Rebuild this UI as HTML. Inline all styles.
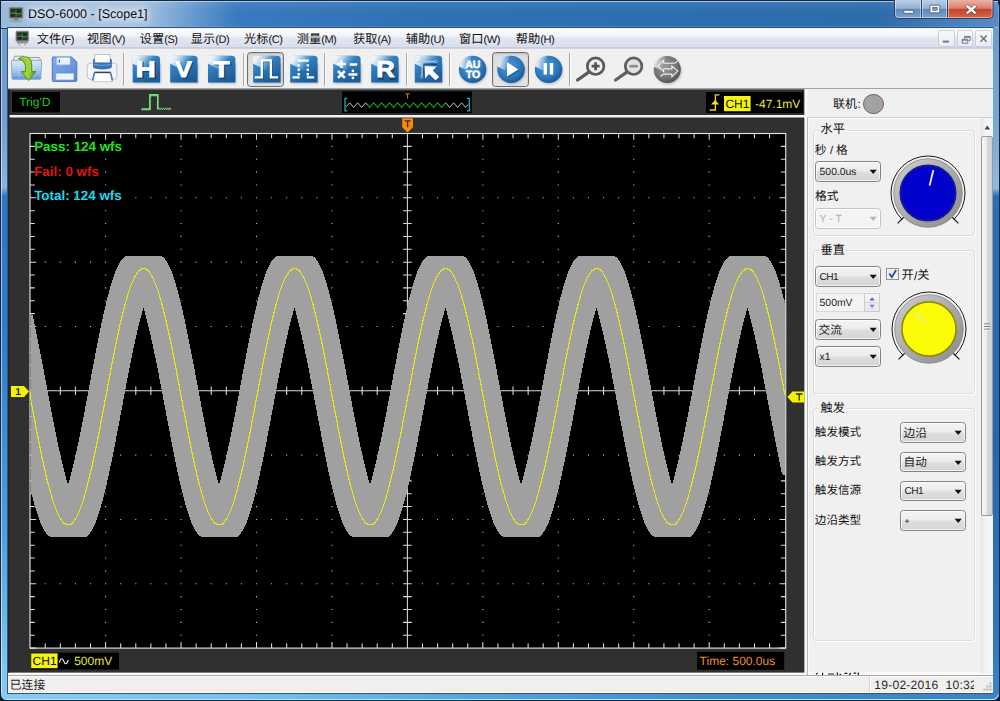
<!DOCTYPE html>
<html><head><meta charset="utf-8"><title>DSO-6000 - [Scope1]</title>
<style>
html,body{margin:0;padding:0;}
body{width:1000px;height:701px;overflow:hidden;background:#0e1b30;font-family:"Liberation Sans", sans-serif;position:relative;text-rendering:geometricPrecision;-webkit-font-smoothing:antialiased;}
.a{position:absolute;}
.t{position:absolute;white-space:pre;line-height:1.149;}
.ov{position:absolute;left:0;top:0;}

#win{left:0;top:0;width:998px;height:699px;border:1px solid #16263e;border-radius:7px 7px 7px 7px;overflow:hidden;
 background:linear-gradient(180deg,#7aa6d4 0,#6f9fd2 28px,#729fd2 120px,#8ab4de 186px,#2e76c6 195px,#2f7ccc 330px,#4a9cde 520px,#7cc4ee 660px,#88ccf2 699px);}
#bframe{left:1px;top:693.4px;width:997px;height:5.6px;background:linear-gradient(90deg,#86cdf2 0,#74c1ec 250px,#52a6e0 470px,#3e8ed4 700px,#3684ca 1000px);box-shadow:0 1px 0 rgba(200,235,255,.8);border-radius:0 0 6px 6px;}
#win2{left:1px;top:1px;width:994px;height:695px;border:1px solid rgba(255,255,255,.55);border-radius:6px;}
#rframe{left:993px;top:28px;width:6px;height:666px;background:linear-gradient(180deg,#6c9bcd 0,#78a8d8 100px,#8fbbe2 160px,#2c6db8 168px,#2767b2 420px,#2f74bc 600px,#3a84c8 666px);}
#title{left:1px;top:1px;width:997px;height:27px;
 background:linear-gradient(90deg,#9ab8d8 0,#a9c4e0 60px,#a6c2df 140px,#6f9fd0 185px,#397ac0 235px,#2e72b6 420px,#2c6fb0 700px,#2d6cad 880px,#5a8cc4 1000px);}
#titleshade{left:1px;top:1px;width:997px;height:27.6px;background:linear-gradient(180deg,rgba(200,225,248,.75) 0,rgba(200,225,248,.75) 1px,rgba(255,255,255,.08) 1.2px,rgba(255,255,255,0) 10px,rgba(255,255,255,0) 25.4px,rgba(150,200,240,.7) 25.8px,rgba(150,200,240,.7) 26.6px,rgba(20,50,90,.9) 26.9px,rgba(20,50,90,.9) 27.6px);}
#client{left:8px;top:28.4px;width:985px;height:664.4px;background:#f0f0f0;outline:1px solid #35557e;}
#menubar{left:8px;top:28.6px;width:985px;height:20.6px;background:linear-gradient(180deg,#fcfcfe 0,#f5f6fb 5px,#eff1f8 7.6px,#e3e7f2 8.6px,#dfe3f0 13px,#d9deeb 17.8px,#c6cbd9 18.6px,#c6cbd9 19.4px,#f3f3f5 19.9px,#f3f3f5 20.6px);}
#toolbar{left:8px;top:48.5px;width:985px;height:40.5px;background:#f0f0f0;border-bottom:1px solid #a3a3a3;box-sizing:border-box;}
.sep{position:absolute;top:52.5px;width:1px;height:33px;background:#a8a8a8;box-shadow:1px 0 0 #fbfbfb;}
.pressed{position:absolute;top:51.5px;height:35px;width:37px;border:1px solid #707070;border-radius:3.5px;background:linear-gradient(180deg,#dcdcdc,#e6e6e6);box-sizing:border-box;box-shadow:inset 0 1px 2px rgba(0,0,0,.15);}
#status{left:8px;top:674.8px;width:985px;height:18px;background:#f0efee;border-top:1px solid #a6a6a6;box-sizing:border-box;box-shadow:inset 0 1px 0 #fdfdfd,inset 0 -1px 0 #fbfbfb;}
#understrip{left:8px;top:672.4px;width:985px;height:2.6px;background:#f8f8f8;}
.mdi{position:absolute;top:30px;height:16.5px;width:16.5px;border:1px solid #c9cfdc;border-radius:2px;box-sizing:border-box;background:linear-gradient(180deg,#f8f9fc,#e9ecf5);}
.cap{position:absolute;top:0;height:18.5px;box-sizing:border-box;}

.combo{position:absolute;height:20.8px;border:1px solid #848484;border-radius:3.5px;box-sizing:border-box;background:linear-gradient(180deg,#f4f4f4 0,#ececec 45%,#dedede 55%,#d4d4d4 100%);box-shadow:inset 0 0 0 1px rgba(255,255,255,.7);}
.combo.dis{border-color:#c4c4c4;background:#f4f4f4;}
.grp{position:absolute;left:813.4px;width:161.6px;border:1px solid #dcdcdc;border-radius:3.5px;box-sizing:border-box;box-shadow:inset 1px 1px 0 #fdfdfd,1px 1px 0 #fdfdfd;}
.glab{position:absolute;background:#f0f0f0;height:12px;}

</style></head><body>
<div id="win" class="a"></div><div id="win2" class="a"></div>
<div id="title" class="a"></div><div id="titleshade" class="a"></div>
<svg class="a" style="left:8px;top:6px" width="18" height="18" viewBox="0 0 18 18">
<rect x="1.3" y="1.5" width="13.6" height="10.8" rx="1" fill="#5a5f5a" stroke="#8d8f8d" stroke-width="1"/>
<rect x="2.8" y="3" width="10.6" height="7.8" fill="#1d2c22"/>
<path d="M3 7.5H13M8 3.5V10.5" stroke="#3f8a3e" stroke-width="1"/><path d="M3.5 7.5Q5.5 3.5 8 7.5T12.8 7.5" stroke="#62b05a" stroke-width=".55" fill="none" opacity=".8"/>
<rect x="5.5" y="12.8" width="5" height="1.6" fill="#7d7d7d"/><rect x="2.2" y="14.2" width="11.8" height="1.6" rx=".6" fill="#9a9a9a"/>
</svg>
<div class="t" style="left:28.00px;top:7px;font-size:12.50px;color:#0a0a14;font-weight:normal;text-shadow:0 0 6px #fff,0 0 9px #fff,0 0 12px rgba(255,255,255,.8);">DSO-6000 - [Scope1]</div>
<svg class="a" style="left:892px;top:0" width="104" height="22" viewBox="892 0 104 22">
<defs>
<linearGradient id="cb1" x1="0" y1="0" x2="0" y2="1"><stop offset="0" stop-color="#b9cee6"/><stop offset=".45" stop-color="#93b1d4"/><stop offset=".5" stop-color="#5f89bb"/><stop offset="1" stop-color="#7ba4d0"/></linearGradient>
<linearGradient id="cb2" x1="0" y1="0" x2="0" y2="1"><stop offset="0" stop-color="#e9b3a6"/><stop offset=".45" stop-color="#d97f6c"/><stop offset=".5" stop-color="#c2432a"/><stop offset="1" stop-color="#d4694c"/></linearGradient>
</defs>
<path d="M894.5 0V14.5Q894.5 18.5 898.5 18.5H921.5V0Z" fill="url(#cb1)"/>
<rect x="921.5" y="0" width="26" height="18.5" fill="url(#cb1)"/>
<path d="M947.5 0V18.5H989Q993 18.5 993 14.5V0Z" fill="url(#cb2)"/>
<path d="M894.5 0V14.5Q894.5 18.5 898.5 18.5H989Q993 18.5 993 14.5V0M921.5 0V18.5M947.5 0V18.5" fill="none" stroke="#2c3f5c" stroke-width="1"/>
<path d="M895.5 0V14.5Q895.5 17.5 898.5 17.5H989Q992 17.5 992 14.5V0M922.5 0V17.5M920.5 0V17.5M946.5 0V17.5M948.5 0V17.5" fill="none" stroke="rgba(255,255,255,.45)" stroke-width="1"/>
<rect x="903.8" y="10.3" width="9.6" height="3" rx=".5" fill="#fff" stroke="#44546c" stroke-width=".8"/>
<rect x="930" y="5.2" width="9.8" height="7.6" rx=".6" fill="#fff" stroke="#44546c" stroke-width=".8"/><rect x="932.7" y="7.6" width="4.4" height="2.6" fill="#7d9cc4" stroke="#44546c" stroke-width=".7"/>
<path d="M966.6 5.6L975.8 13.6M975.8 5.6L966.6 13.6" stroke="#5a2a22" stroke-width="3.8" stroke-linecap="butt" opacity=".75"/><path d="M966.8 5.8L975.6 13.4M975.6 5.8L966.8 13.4" stroke="#fff" stroke-width="2.5" stroke-linecap="butt"/>
</svg>
<div id="bframe" class="a"></div><div id="client" class="a"></div><div id="rframe" class="a"></div>
<div id="menubar" class="a"></div>
<svg class="a" style="left:14px;top:30px" width="17" height="17" viewBox="0 0 17 17">
<rect x="2" y="1.2" width="12.6" height="10" rx=".8" fill="#575c57" stroke="#8a8c8a" stroke-width=".9"/>
<rect x="3.4" y="2.6" width="9.8" height="7.2" fill="#1d2c22"/>
<path d="M3.6 6.4H13M8.3 3V9.6" stroke="#3f8a3e" stroke-width=".9"/><path d="M4 6.4Q6 2.8 8.3 6.4T12.8 6.4" stroke="#62b05a" stroke-width=".55" fill="none" opacity=".8"/>
<rect x="3" y="11.6" width="10.8" height="1.8" fill="#8a8a8a"/><path d="M4.5 14.8H6.5M10 14.8H12" stroke="#9a9a9a" stroke-width="1"/>
</svg>
<div class="t" style="left:61.30px;top:34px;font-size:11.00px;color:#101010;font-weight:normal;letter-spacing:-.5px;">(F)</div>
<div class="t" style="left:111.70px;top:34px;font-size:11.00px;color:#101010;font-weight:normal;letter-spacing:-.5px;">(V)</div>
<div class="t" style="left:164.30px;top:34px;font-size:11.00px;color:#101010;font-weight:normal;letter-spacing:-.5px;">(S)</div>
<div class="t" style="left:215.30px;top:34px;font-size:11.00px;color:#101010;font-weight:normal;letter-spacing:-.5px;">(D)</div>
<div class="t" style="left:268.60px;top:34px;font-size:11.00px;color:#101010;font-weight:normal;letter-spacing:-.5px;">(C)</div>
<div class="t" style="left:321.30px;top:34px;font-size:11.00px;color:#101010;font-weight:normal;letter-spacing:-.5px;">(M)</div>
<div class="t" style="left:377.60px;top:34px;font-size:11.00px;color:#101010;font-weight:normal;letter-spacing:-.5px;">(A)</div>
<div class="t" style="left:430.30px;top:34px;font-size:11.00px;color:#101010;font-weight:normal;letter-spacing:-.5px;">(U)</div>
<div class="t" style="left:483.60px;top:34px;font-size:11.00px;color:#101010;font-weight:normal;letter-spacing:-.5px;">(W)</div>
<div class="t" style="left:540.30px;top:34px;font-size:11.00px;color:#101010;font-weight:normal;letter-spacing:-.5px;">(H)</div>
<div class="mdi" style="left:938.3px"></div>
<div class="mdi" style="left:956.6px"></div>
<div class="mdi" style="left:975.0px"></div>
<svg class="a" style="left:936px;top:28px" width="58" height="20" viewBox="936 28 58 20">
<rect x="942.8" y="40.6" width="6.2" height="1.9" fill="#6f7480"/>
<path d="M962.2 39.3H967.8V43.2H962.2ZM962.2 40.2H967.8" fill="none" stroke="#737888" stroke-width="1"/><path d="M964.6 38.6V36.4H970.2V40.5H968.6M964.6 37.3H970.2" fill="none" stroke="#737888" stroke-width="1"/>
<path d="M980.5 35.4L986.7 41.8M986.7 35.4L980.5 41.8" stroke="#6f7482" stroke-width="1.5"/>
</svg>
<div id="toolbar" class="a"></div>
<div id="understrip" class="a"></div><div id="status" class="a"></div>
<div class="a" style="left:868.5px;top:676px;width:1px;height:16px;background:#d4d4d4;box-shadow:1px 0 0 #fff"></div>
<div class="t" style="left:874.30px;top:679px;font-size:12.10px;color:#2a2a2a;font-weight:normal;width:99.9px;overflow:hidden;letter-spacing:.22px;">19-02-2016  10:32</div>
<svg class="a" style="left:982px;top:681px" width="11" height="11" viewBox="0 0 11 11"><g fill="#b8b8b8"><rect x="7.5" y="7.5" width="2" height="2"/><rect x="4.5" y="7.5" width="2" height="2"/><rect x="7.5" y="4.5" width="2" height="2"/><rect x="1.5" y="7.5" width="2" height="2"/><rect x="4.5" y="4.5" width="2" height="2"/><rect x="7.5" y="1.5" width="2" height="2"/></g></svg>
<div class="sep" style="left:123.2px"></div>
<div class="sep" style="left:243.0px"></div>
<div class="sep" style="left:324.4px"></div>
<div class="sep" style="left:406.4px"></div>
<div class="sep" style="left:449.3px"></div>
<div class="sep" style="left:569.2px"></div>
<div class="pressed" style="left:247.2px"></div><div class="pressed" style="left:491.6px"></div>
<svg class="a" style="left:0;top:48px" width="720" height="42" viewBox="0 48 720 42"><defs>
<linearGradient id="bl" x1="0" y1="0" x2=".55" y2="1"><stop offset="0" stop-color="#5a9ed6"/><stop offset=".45" stop-color="#2f7cbc"/><stop offset="1" stop-color="#1c5c98"/></linearGradient>
<linearGradient id="fold" x1="0" y1="0" x2="1" y2="1"><stop offset="0" stop-color="#f0f6fc" stop-opacity=".0"/><stop offset=".45" stop-color="#d6e6f6" stop-opacity=".85"/><stop offset="1" stop-color="#6fa8da"/></linearGradient>
<radialGradient id="ball" cx=".42" cy=".38" r=".62"><stop offset="0" stop-color="#4f97d2"/><stop offset=".7" stop-color="#2c78ba"/><stop offset="1" stop-color="#1a5a98"/></radialGradient>
<radialGradient id="gball" cx=".42" cy=".38" r=".62"><stop offset="0" stop-color="#9a9a9a"/><stop offset=".7" stop-color="#757575"/><stop offset="1" stop-color="#555"/></radialGradient>
<linearGradient id="curl" x1="0" y1=".1" x2=".8" y2=".45"><stop offset="0" stop-color="#f2f4f6" stop-opacity="1"/><stop offset=".22" stop-color="#e8eff7" stop-opacity="1"/><stop offset=".5" stop-color="#b4d1ec" stop-opacity=".92"/><stop offset=".8" stop-color="#6fa8da" stop-opacity=".55"/><stop offset="1" stop-color="#4a8fcc" stop-opacity="0"/></linearGradient><linearGradient id="curlb" x1="0" y1=".35" x2="1" y2=".6"><stop offset="0" stop-color="#f2f4f6" stop-opacity="1"/><stop offset=".3" stop-color="#dfeaf5" stop-opacity=".96"/><stop offset=".65" stop-color="#9fc5e8" stop-opacity=".75"/><stop offset="1" stop-color="#5e9dd4" stop-opacity=".1"/></linearGradient><linearGradient id="curlg" x1="0" y1=".35" x2="1" y2=".6"><stop offset="0" stop-color="#f2f2f2" stop-opacity="1"/><stop offset=".3" stop-color="#dcdcdc" stop-opacity=".95"/><stop offset=".65" stop-color="#b4b4b4" stop-opacity=".7"/><stop offset="1" stop-color="#8a8a8a" stop-opacity=".1"/></linearGradient><linearGradient id="fold2" x1="0" y1="0" x2="1" y2="1"><stop offset="0" stop-color="#e8f2fb"/><stop offset="1" stop-color="#5c9fd6"/></linearGradient>
<linearGradient id="fo" x1="0" y1="0" x2="0" y2="1"><stop offset="0" stop-color="#dbe8f7"/><stop offset=".5" stop-color="#a9c8ee"/><stop offset="1" stop-color="#5a95dc"/></linearGradient>
<linearGradient id="ga" x1="0" y1="0" x2="1" y2="0"><stop offset="0" stop-color="#6aa816"/><stop offset=".5" stop-color="#a4d83a"/><stop offset="1" stop-color="#5c9a12"/></linearGradient>
<linearGradient id="fl" x1="0" y1="0" x2="1" y2="1"><stop offset="0" stop-color="#86aae6"/><stop offset="1" stop-color="#5a88d6"/></linearGradient>
<filter id="sh" x="-20%" y="-20%" width="150%" height="150%"><feGaussianBlur stdDeviation=".9"/></filter>
<filter id="sh2" x="-20%" y="-20%" width="150%" height="150%"><feGaussianBlur stdDeviation=".5"/></filter>
</defs><path d="M13.2 60.6L14.6 56.2H23.4L24.6 57.6H39.4L40.8 60.6Z" fill="#f4f4f4" stroke="#8a8a8a" stroke-width=".9"/><path d="M11.4 61Q11.4 60.2 12.2 60.2H40.8Q41.6 60.2 41.6 61L40.8 78.4Q40.7 79.3 39.8 79.3H13Q12.1 79.3 12 78.4Z" fill="url(#fo)" stroke="#7d9cc8" stroke-width=".8"/><path d="M12 63.2H41M12 65.6H41M12 68H41M12 70.4H41M12 72.8H41M12.3 75.2H40.8M19 60.6V79M34 60.6V79" stroke="#f2f7fd" stroke-width=".4" opacity=".45"/><path d="M18.2 58.6Q27.4 54.2 30.8 60.2Q31.7 62.2 31.7 65V71.6H36L28.6 80.6L21.2 71.6H25.5V66.4Q25.3 61 18.2 58.6Z" fill="url(#ga)" stroke="#4f8a10" stroke-width=".9" stroke-linejoin="round"/><path d="M21 58.2Q29 56.4 30.2 63.6V72.4" stroke="#c9ec6a" stroke-width="1" fill="none" opacity=".75"/><path d="M52.3 58Q52.3 57 53.3 57H71.6L76.8 62V80.4Q76.8 81.4 75.8 81.4H53.3Q52.3 81.4 52.3 80.4Z" fill="url(#fl)" stroke="#4a76c8" stroke-width="1"/><path d="M56.8 57.5H70V64.2Q70 64.8 69.4 64.8H57.4Q56.8 64.8 56.8 64.2Z" fill="#e9f0fa" stroke="#a9c0e6" stroke-width=".5"/><rect x="58.7" y="59.6" width="1.3" height="3.4" fill="#5d6f92"/><path d="M60.5 58L69.6 58L69.6 61Z" fill="#fff" opacity=".6"/><rect x="56" y="73.6" width="17.6" height="6.2" fill="#f3f6fb" stroke="#b4c8ea" stroke-width=".5"/><path d="M56.4 76.4H73.2" stroke="#dfe7f3" stroke-width=".8"/><rect x="94.8" y="54.4" width="15.2" height="10" fill="#fbfbfd" stroke="#b2b8c4" stroke-width=".8"/><rect x="87.3" y="63.2" width="29.6" height="16" rx="3" fill="#f3f5f9" stroke="#b4bed0" stroke-width=".9"/><path d="M93 60.4Q93 58.4 94.8 58.6V62.6H110V58.6Q111.9 58.4 111.9 60.4V66.2Q111.9 68.4 109 68.8Q102.5 70 96 68.8Q93 68.4 93 66.2Z" fill="#3c74ba"/><path d="M94 64.6Q102.5 66.2 111 64.6" stroke="#79a4d8" stroke-width="1" fill="none"/><path d="M94.6 72.6H110.4L112.6 81.6H92.4Z" fill="#fdfdfe" stroke="#b6bcc8" stroke-width=".7"/><path d="M94.4 72.4H110.6" stroke="#3a4250" stroke-width="1.5"/><path d="M94.4 72.6L92.6 80.6M110.6 72.6L112.4 80.6" stroke="#4a80c2" stroke-width="1.7"/><path d="M133.7 63.8H160.7V83.4H133.7Z" fill="#1a4a7a" opacity=".35" filter="url(#sh)"/><path d="M132.7 57.3L134.2 55.8H156.6Q160.1 55.8 160.1 59.3V82.6H132.7Z" fill="url(#bl)"/><path d="M132.4 63.6L141.7 68.2L149.7 73.3L156.7 55.5H134.2L132.4 57.3Z" fill="url(#curl)"/><g transform="translate(145.7 0) scale(1.22 1)"><text x="1" y="78.4" font-family='"Liberation Sans",sans-serif' font-weight="bold" font-size="22.6" text-anchor="middle" fill="#0c3158" opacity=".6" filter="url(#sh2)" stroke="#0c3158" stroke-width="1.6">H</text><text x="0" y="77.1" font-family='"Liberation Sans",sans-serif' font-weight="bold" font-size="22.6" text-anchor="middle" fill="#fff" stroke="#fff" stroke-width="0.90" stroke-linejoin="miter">H</text></g><path d="M171.2 63.8H198.2V83.4H171.2Z" fill="#1a4a7a" opacity=".35" filter="url(#sh)"/><path d="M170.2 57.3L171.7 55.8H194.1Q197.6 55.8 197.6 59.3V82.6H170.2Z" fill="url(#bl)"/><path d="M169.9 63.6L179.2 68.2L187.2 73.3L194.2 55.5H171.7L169.9 57.3Z" fill="url(#curl)"/><g transform="translate(183.5 0) scale(1.10 1)"><text x="1" y="78.4" font-family='"Liberation Sans",sans-serif' font-weight="bold" font-size="22.6" text-anchor="middle" fill="#0c3158" opacity=".6" filter="url(#sh2)" stroke="#0c3158" stroke-width="1.6">V</text><text x="0" y="77.1" font-family='"Liberation Sans",sans-serif' font-weight="bold" font-size="22.6" text-anchor="middle" fill="#fff" stroke="#fff" stroke-width="0.90" stroke-linejoin="miter">V</text></g><path d="M209.0 63.8H236.0V83.4H209.0Z" fill="#1a4a7a" opacity=".35" filter="url(#sh)"/><path d="M208.0 57.3L209.5 55.8H231.9Q235.4 55.8 235.4 59.3V82.6H208.0Z" fill="url(#bl)"/><path d="M207.7 63.6L217.0 68.2L225.0 73.3L232.0 55.5H209.5L207.7 57.3Z" fill="url(#curl)"/><g transform="translate(221.3 0) scale(1.20 1)"><text x="1" y="78.4" font-family='"Liberation Sans",sans-serif' font-weight="bold" font-size="22.6" text-anchor="middle" fill="#0c3158" opacity=".6" filter="url(#sh2)" stroke="#0c3158" stroke-width="1.6">T</text><text x="0" y="77.1" font-family='"Liberation Sans",sans-serif' font-weight="bold" font-size="22.6" text-anchor="middle" fill="#fff" stroke="#fff" stroke-width="0.90" stroke-linejoin="miter">T</text></g><path d="M254.2 63.8H281.2V83.4H254.2Z" fill="#1a4a7a" opacity=".35" filter="url(#sh)"/><path d="M253.2 57.3L254.7 55.8H277.1Q280.6 55.8 280.6 59.3V82.6H253.2Z" fill="url(#bl)"/><path d="M252.9 63.6L262.2 68.2L270.2 73.3L277.2 55.5H254.7L252.9 57.3Z" fill="url(#curl)"/><path d="M254.8 77.3H261.8V60.4H270.9V77.3H278.2" stroke="#10406e" stroke-width="2.4" fill="none" opacity=".5" transform="translate(.8 1)" filter="url(#sh2)"/><path d="M254.8 77.3H261.8V60.4H270.9V77.3H278.2" stroke="#fff" stroke-width="2.3" fill="none"/><path d="M291.2 63.8H318.2V83.4H291.2Z" fill="#1a4a7a" opacity=".35" filter="url(#sh)"/><path d="M290.2 57.3L291.7 55.8H314.1Q317.6 55.8 317.6 59.3V82.6H290.2Z" fill="url(#bl)"/><path d="M289.9 63.6L299.2 68.2L307.2 73.3L314.2 55.5H291.7L289.9 57.3Z" fill="url(#curl)"/><path d="M292.4 77.3H299.6M306.8 77.3H314.2M297.6 60.7H308.9" stroke="#fff" stroke-width="2.2" fill="none"/><path d="M298.7 64.2V75.4M307.8 64.2V75.4" stroke="#fff" stroke-width="2.3" stroke-dasharray="2.4 2" fill="none"/><path d="M334.2 63.8H361.2V83.4H334.2Z" fill="#1a4a7a" opacity=".35" filter="url(#sh)"/><path d="M333.2 57.3L334.7 55.8H357.1Q360.6 55.8 360.6 59.3V82.6H333.2Z" fill="url(#bl)"/><path d="M332.9 63.6L342.2 68.2L350.2 73.3L357.2 55.5H334.7L332.9 57.3Z" fill="url(#curl)"/><path d="M336.9 64.1H345.9M341.4 60.2V68M349.7 64.4H357.3M338 71L344.8 77.8M344.8 71L338 77.8M348.4 74.4H357.4" stroke="#fff" stroke-width="2.5" fill="none"/><circle cx="352.9" cy="70.9" r="1.35" fill="#fff"/><circle cx="352.9" cy="77.9" r="1.35" fill="#fff"/><path d="M372.2 63.8H399.2V83.4H372.2Z" fill="#1a4a7a" opacity=".35" filter="url(#sh)"/><path d="M371.2 57.3L372.7 55.8H395.1Q398.6 55.8 398.6 59.3V82.6H371.2Z" fill="url(#bl)"/><path d="M370.9 63.6L380.2 68.2L388.2 73.3L395.2 55.5H372.7L370.9 57.3Z" fill="url(#curl)"/><g transform="translate(385.4 0) scale(1.12 1)"><text x="1" y="78.6" font-family='"Liberation Sans",sans-serif' font-weight="bold" font-size="22.8" text-anchor="middle" fill="#0c3158" opacity=".6" filter="url(#sh2)" stroke="#0c3158" stroke-width="1.6">R</text><text x="0" y="77.3" font-family='"Liberation Sans",sans-serif' font-weight="bold" font-size="22.8" text-anchor="middle" fill="#fff" stroke="#fff" stroke-width="0.90" stroke-linejoin="miter">R</text></g><path d="M415.8 63.8H442.8V83.4H415.8Z" fill="#1a4a7a" opacity=".35" filter="url(#sh)"/><path d="M414.8 57.3L416.3 55.8H438.7Q442.2 55.8 442.2 59.3V82.6H414.8Z" fill="url(#bl)"/><path d="M414.5 63.6L423.8 68.2L431.8 73.3L438.8 55.5H416.3L414.5 57.3Z" fill="url(#curl)"/><path d="M422.1 58.8V75.4M417.4 61.6H434.6" stroke="#a9d0ee" stroke-width="1.2" fill="none"/><circle cx="422.1" cy="58.2" r="1.3" fill="none" stroke="#a9d0ee" stroke-width=".9"/><circle cx="422.1" cy="76.4" r="1.4" fill="none" stroke="#a9d0ee" stroke-width=".9"/><circle cx="435.6" cy="61.6" r="1.4" fill="none" stroke="#a9d0ee" stroke-width=".9"/><path d="M424 78V64.4H437" stroke="#123e6a" stroke-width="1.6" fill="none" opacity=".75"/><path d="M424.6 66.2L436.6 66.6L432.7 70.5L439.2 77L435.5 80.3L429 74.1L425 78.6Z" fill="#fff"/><circle cx="473.4" cy="70.6" r="13.7" fill="#1a4a7a" opacity=".3" filter="url(#sh)"/><circle cx="472.6" cy="69.4" r="13.7" fill="url(#ball)"/><clipPath id="cb472"><circle cx="472.6" cy="69.4" r="14.0"/></clipPath><path clip-path="url(#cb472)" d="M457.9 66.0L467.0 70.6L472.1 54.7H457.9Z" fill="url(#curlb)"/><text x="472.8" y="68.4" font-family='"Liberation Sans",sans-serif' font-weight="bold" font-size="10.6" text-anchor="middle" fill="#fff" stroke="#fff" stroke-width=".55">AU</text><text x="473" y="77.6" font-family='"Liberation Sans",sans-serif' font-weight="bold" font-size="10.6" text-anchor="middle" fill="#fff" stroke="#fff" stroke-width=".55">TO</text><circle cx="511.8" cy="70.6" r="13.7" fill="#1a4a7a" opacity=".3" filter="url(#sh)"/><circle cx="511.0" cy="69.4" r="13.7" fill="url(#ball)"/><clipPath id="cb511"><circle cx="511.0" cy="69.4" r="14.0"/></clipPath><path clip-path="url(#cb511)" d="M496.3 66.0L505.4 70.6L510.5 54.7H496.3Z" fill="url(#curlb)"/><path d="M507 62.2L518.4 69.4L507 76.6Z" fill="#0e3c68" opacity=".5" transform="translate(1 1.2)" filter="url(#sh2)"/><path d="M507 62.2L518.4 69.4L507 76.6Z" fill="#fff"/><circle cx="549.4" cy="70.6" r="13.7" fill="#1a4a7a" opacity=".3" filter="url(#sh)"/><circle cx="548.6" cy="69.4" r="13.7" fill="url(#ball)"/><clipPath id="cb548"><circle cx="548.6" cy="69.4" r="14.0"/></clipPath><path clip-path="url(#cb548)" d="M533.9 66.0L543.0 70.6L548.1 54.7H533.9Z" fill="url(#curlb)"/><rect x="543.6" y="63" width="3.4" height="11.6" fill="#fff"/><rect x="549.8" y="63" width="3.4" height="11.6" fill="#fff"/><path d="M588.8 72.2L577.6 80" stroke="#5a5a5a" stroke-width="3.3" stroke-linecap="round"/><circle cx="595.6" cy="66.2" r="8.3" fill="#ededed" stroke="#595959" stroke-width="2.7"/><path d="M591.6 66.2H599.6M595.6 62.2V70.2" stroke="#555" stroke-width="2.7"/><path d="M626.8 72.2L615.6 80" stroke="#606060" stroke-width="3.3" stroke-linecap="round"/><circle cx="633.6" cy="66.2" r="8.3" fill="#e2e2e2" stroke="#5e5e5e" stroke-width="2.7"/><path d="M629.4 66.2H637.8" stroke="#8a8a8a" stroke-width="2.6"/><circle cx="668.1" cy="70.7" r="13.5" fill="#1a4a7a" opacity=".3" filter="url(#sh)"/><circle cx="667.3" cy="69.5" r="13.5" fill="url(#gball)"/><clipPath id="cb667"><circle cx="667.3" cy="69.5" r="13.8"/></clipPath><path clip-path="url(#cb667)" d="M652.8 66.1L661.7 70.7L666.8 55.0H652.8Z" fill="url(#curlg)"/><path d="M677.5 61Q676.2 63.3 673 63.3H663.7V60.3L658 66L663.7 71.7V68.7H669.7M660.5 76.7Q661.8 74.1 665 74.1H671.8V76.7L677.8 71.1L671.8 66.1V68.9H665.6" fill="none" stroke="#f2f2f2" stroke-width="1.05" stroke-linejoin="miter"/></svg>
<svg class="a" style="left:0;top:0" width="1000" height="701" viewBox="0 0 1000 701"><rect x="8" y="89.3" width="796.6" height="583.3" fill="#303030"/><rect x="8" y="89.3" width="1.6" height="583.3" fill="#242424"/><rect x="804.6" y="89.3" width="2.6" height="584" fill="#fafafa"/><rect x="9.6" y="115" width="797.5" height="2.5" fill="#f2f2f2"/><rect x="30.00" y="133.50" width="755.70" height="514.60" fill="#000"/><path d="M45.24 133.50v4.8M45.24 648.10v-4.8M60.33 133.50v4.8M60.33 648.10v-4.8M75.42 133.50v4.8M75.42 648.10v-4.8M90.51 133.50v4.8M90.51 648.10v-4.8M105.60 133.50v6.2M105.60 648.10v-6.2M120.69 133.50v4.8M120.69 648.10v-4.8M135.78 133.50v4.8M135.78 648.10v-4.8M150.87 133.50v4.8M150.87 648.10v-4.8M165.96 133.50v4.8M165.96 648.10v-4.8M181.05 133.50v6.2M181.05 648.10v-6.2M196.14 133.50v4.8M196.14 648.10v-4.8M211.23 133.50v4.8M211.23 648.10v-4.8M226.32 133.50v4.8M226.32 648.10v-4.8M241.41 133.50v4.8M241.41 648.10v-4.8M256.50 133.50v6.2M256.50 648.10v-6.2M271.59 133.50v4.8M271.59 648.10v-4.8M286.68 133.50v4.8M286.68 648.10v-4.8M301.77 133.50v4.8M301.77 648.10v-4.8M316.86 133.50v4.8M316.86 648.10v-4.8M331.95 133.50v6.2M331.95 648.10v-6.2M347.04 133.50v4.8M347.04 648.10v-4.8M362.13 133.50v4.8M362.13 648.10v-4.8M377.22 133.50v4.8M377.22 648.10v-4.8M392.31 133.50v4.8M392.31 648.10v-4.8M407.40 133.50v6.2M407.40 648.10v-6.2M422.49 133.50v4.8M422.49 648.10v-4.8M437.58 133.50v4.8M437.58 648.10v-4.8M452.67 133.50v4.8M452.67 648.10v-4.8M467.76 133.50v4.8M467.76 648.10v-4.8M482.85 133.50v6.2M482.85 648.10v-6.2M497.94 133.50v4.8M497.94 648.10v-4.8M513.03 133.50v4.8M513.03 648.10v-4.8M528.12 133.50v4.8M528.12 648.10v-4.8M543.21 133.50v4.8M543.21 648.10v-4.8M558.30 133.50v6.2M558.30 648.10v-6.2M573.39 133.50v4.8M573.39 648.10v-4.8M588.48 133.50v4.8M588.48 648.10v-4.8M603.57 133.50v4.8M603.57 648.10v-4.8M618.66 133.50v4.8M618.66 648.10v-4.8M633.75 133.50v6.2M633.75 648.10v-6.2M648.84 133.50v4.8M648.84 648.10v-4.8M663.93 133.50v4.8M663.93 648.10v-4.8M679.02 133.50v4.8M679.02 648.10v-4.8M694.11 133.50v4.8M694.11 648.10v-4.8M709.20 133.50v6.2M709.20 648.10v-6.2M724.29 133.50v4.8M724.29 648.10v-4.8M739.38 133.50v4.8M739.38 648.10v-4.8M754.47 133.50v4.8M754.47 648.10v-4.8M769.56 133.50v4.8M769.56 648.10v-4.8M30.00 133.50h6.2M785.70 133.50h-6.2M30.00 146.37h4.8M785.70 146.37h-4.8M30.00 159.23h4.8M785.70 159.23h-4.8M30.00 172.09h4.8M785.70 172.09h-4.8M30.00 184.96h4.8M785.70 184.96h-4.8M30.00 197.82h6.2M785.70 197.82h-6.2M30.00 210.69h4.8M785.70 210.69h-4.8M30.00 223.56h4.8M785.70 223.56h-4.8M30.00 236.42h4.8M785.70 236.42h-4.8M30.00 249.29h4.8M785.70 249.29h-4.8M30.00 262.15h6.2M785.70 262.15h-6.2M30.00 275.01h4.8M785.70 275.01h-4.8M30.00 287.88h4.8M785.70 287.88h-4.8M30.00 300.75h4.8M785.70 300.75h-4.8M30.00 313.61h4.8M785.70 313.61h-4.8M30.00 326.48h6.2M785.70 326.48h-6.2M30.00 339.34h4.8M785.70 339.34h-4.8M30.00 352.21h4.8M785.70 352.21h-4.8M30.00 365.07h4.8M785.70 365.07h-4.8M30.00 377.94h4.8M785.70 377.94h-4.8M30.00 390.80h6.2M785.70 390.80h-6.2M30.00 403.67h4.8M785.70 403.67h-4.8M30.00 416.53h4.8M785.70 416.53h-4.8M30.00 429.40h4.8M785.70 429.40h-4.8M30.00 442.26h4.8M785.70 442.26h-4.8M30.00 455.12h6.2M785.70 455.12h-6.2M30.00 467.99h4.8M785.70 467.99h-4.8M30.00 480.86h4.8M785.70 480.86h-4.8M30.00 493.72h4.8M785.70 493.72h-4.8M30.00 506.59h4.8M785.70 506.59h-4.8M30.00 519.45h6.2M785.70 519.45h-6.2M30.00 532.32h4.8M785.70 532.32h-4.8M30.00 545.18h4.8M785.70 545.18h-4.8M30.00 558.04h4.8M785.70 558.04h-4.8M30.00 570.91h4.8M785.70 570.91h-4.8M30.00 583.77h6.2M785.70 583.77h-6.2M30.00 596.64h4.8M785.70 596.64h-4.8M30.00 609.50h4.8M785.70 609.50h-4.8M30.00 622.37h4.8M785.70 622.37h-4.8M30.00 635.24h4.8M785.70 635.24h-4.8M30.00 648.10h6.2M785.70 648.10h-6.2M45.24 386.50v8.6M60.33 386.50v8.6M75.42 386.50v8.6M90.51 386.50v8.6M105.60 386.50v8.6M120.69 386.50v8.6M135.78 386.50v8.6M150.87 386.50v8.6M165.96 386.50v8.6M181.05 386.50v8.6M196.14 386.50v8.6M211.23 386.50v8.6M226.32 386.50v8.6M241.41 386.50v8.6M256.50 386.50v8.6M271.59 386.50v8.6M286.68 386.50v8.6M301.77 386.50v8.6M316.86 386.50v8.6M331.95 386.50v8.6M347.04 386.50v8.6M362.13 386.50v8.6M377.22 386.50v8.6M392.31 386.50v8.6M407.40 386.50v8.6M422.49 386.50v8.6M437.58 386.50v8.6M452.67 386.50v8.6M467.76 386.50v8.6M482.85 386.50v8.6M497.94 386.50v8.6M513.03 386.50v8.6M528.12 386.50v8.6M543.21 386.50v8.6M558.30 386.50v8.6M573.39 386.50v8.6M588.48 386.50v8.6M603.57 386.50v8.6M618.66 386.50v8.6M633.75 386.50v8.6M648.84 386.50v8.6M663.93 386.50v8.6M679.02 386.50v8.6M694.11 386.50v8.6M709.20 386.50v8.6M724.29 386.50v8.6M739.38 386.50v8.6M754.47 386.50v8.6M769.56 386.50v8.6M403.10 146.37h8.6M403.10 159.23h8.6M403.10 172.09h8.6M403.10 184.96h8.6M403.10 197.82h8.6M403.10 210.69h8.6M403.10 223.56h8.6M403.10 236.42h8.6M403.10 249.29h8.6M403.10 262.15h8.6M403.10 275.01h8.6M403.10 287.88h8.6M403.10 300.75h8.6M403.10 313.61h8.6M403.10 326.48h8.6M403.10 339.34h8.6M403.10 352.21h8.6M403.10 365.07h8.6M403.10 377.94h8.6M403.10 390.80h8.6M403.10 403.67h8.6M403.10 416.53h8.6M403.10 429.40h8.6M403.10 442.26h8.6M403.10 455.12h8.6M403.10 467.99h8.6M403.10 480.86h8.6M403.10 493.72h8.6M403.10 506.59h8.6M403.10 519.45h8.6M403.10 532.32h8.6M403.10 545.18h8.6M403.10 558.04h8.6M403.10 570.91h8.6M403.10 583.77h8.6M403.10 596.64h8.6M403.10 609.50h8.6M403.10 622.37h8.6M403.10 635.24h8.6M30.00 390.80H785.70M407.40 133.50V648.10" stroke="#dadada" stroke-width="1.05" fill="none"/><path d="M105.05 146.37h1.1M105.05 159.23h1.1M105.05 172.09h1.1M105.05 184.96h1.1M105.05 197.82h1.1M105.05 210.69h1.1M105.05 223.56h1.1M105.05 236.42h1.1M105.05 249.29h1.1M105.05 262.15h1.1M105.05 275.01h1.1M105.05 287.88h1.1M105.05 300.75h1.1M105.05 313.61h1.1M105.05 326.48h1.1M105.05 339.34h1.1M105.05 352.21h1.1M105.05 365.07h1.1M105.05 377.94h1.1M105.05 390.80h1.1M105.05 403.67h1.1M105.05 416.53h1.1M105.05 429.40h1.1M105.05 442.26h1.1M105.05 455.12h1.1M105.05 467.99h1.1M105.05 480.86h1.1M105.05 493.72h1.1M105.05 506.59h1.1M105.05 519.45h1.1M105.05 532.32h1.1M105.05 545.18h1.1M105.05 558.04h1.1M105.05 570.91h1.1M105.05 583.77h1.1M105.05 596.64h1.1M105.05 609.50h1.1M105.05 622.37h1.1M105.05 635.24h1.1M180.50 146.37h1.1M180.50 159.23h1.1M180.50 172.09h1.1M180.50 184.96h1.1M180.50 197.82h1.1M180.50 210.69h1.1M180.50 223.56h1.1M180.50 236.42h1.1M180.50 249.29h1.1M180.50 262.15h1.1M180.50 275.01h1.1M180.50 287.88h1.1M180.50 300.75h1.1M180.50 313.61h1.1M180.50 326.48h1.1M180.50 339.34h1.1M180.50 352.21h1.1M180.50 365.07h1.1M180.50 377.94h1.1M180.50 390.80h1.1M180.50 403.67h1.1M180.50 416.53h1.1M180.50 429.40h1.1M180.50 442.26h1.1M180.50 455.12h1.1M180.50 467.99h1.1M180.50 480.86h1.1M180.50 493.72h1.1M180.50 506.59h1.1M180.50 519.45h1.1M180.50 532.32h1.1M180.50 545.18h1.1M180.50 558.04h1.1M180.50 570.91h1.1M180.50 583.77h1.1M180.50 596.64h1.1M180.50 609.50h1.1M180.50 622.37h1.1M180.50 635.24h1.1M255.95 146.37h1.1M255.95 159.23h1.1M255.95 172.09h1.1M255.95 184.96h1.1M255.95 197.82h1.1M255.95 210.69h1.1M255.95 223.56h1.1M255.95 236.42h1.1M255.95 249.29h1.1M255.95 262.15h1.1M255.95 275.01h1.1M255.95 287.88h1.1M255.95 300.75h1.1M255.95 313.61h1.1M255.95 326.48h1.1M255.95 339.34h1.1M255.95 352.21h1.1M255.95 365.07h1.1M255.95 377.94h1.1M255.95 390.80h1.1M255.95 403.67h1.1M255.95 416.53h1.1M255.95 429.40h1.1M255.95 442.26h1.1M255.95 455.12h1.1M255.95 467.99h1.1M255.95 480.86h1.1M255.95 493.72h1.1M255.95 506.59h1.1M255.95 519.45h1.1M255.95 532.32h1.1M255.95 545.18h1.1M255.95 558.04h1.1M255.95 570.91h1.1M255.95 583.77h1.1M255.95 596.64h1.1M255.95 609.50h1.1M255.95 622.37h1.1M255.95 635.24h1.1M331.40 146.37h1.1M331.40 159.23h1.1M331.40 172.09h1.1M331.40 184.96h1.1M331.40 197.82h1.1M331.40 210.69h1.1M331.40 223.56h1.1M331.40 236.42h1.1M331.40 249.29h1.1M331.40 262.15h1.1M331.40 275.01h1.1M331.40 287.88h1.1M331.40 300.75h1.1M331.40 313.61h1.1M331.40 326.48h1.1M331.40 339.34h1.1M331.40 352.21h1.1M331.40 365.07h1.1M331.40 377.94h1.1M331.40 390.80h1.1M331.40 403.67h1.1M331.40 416.53h1.1M331.40 429.40h1.1M331.40 442.26h1.1M331.40 455.12h1.1M331.40 467.99h1.1M331.40 480.86h1.1M331.40 493.72h1.1M331.40 506.59h1.1M331.40 519.45h1.1M331.40 532.32h1.1M331.40 545.18h1.1M331.40 558.04h1.1M331.40 570.91h1.1M331.40 583.77h1.1M331.40 596.64h1.1M331.40 609.50h1.1M331.40 622.37h1.1M331.40 635.24h1.1M482.30 146.37h1.1M482.30 159.23h1.1M482.30 172.09h1.1M482.30 184.96h1.1M482.30 197.82h1.1M482.30 210.69h1.1M482.30 223.56h1.1M482.30 236.42h1.1M482.30 249.29h1.1M482.30 262.15h1.1M482.30 275.01h1.1M482.30 287.88h1.1M482.30 300.75h1.1M482.30 313.61h1.1M482.30 326.48h1.1M482.30 339.34h1.1M482.30 352.21h1.1M482.30 365.07h1.1M482.30 377.94h1.1M482.30 390.80h1.1M482.30 403.67h1.1M482.30 416.53h1.1M482.30 429.40h1.1M482.30 442.26h1.1M482.30 455.12h1.1M482.30 467.99h1.1M482.30 480.86h1.1M482.30 493.72h1.1M482.30 506.59h1.1M482.30 519.45h1.1M482.30 532.32h1.1M482.30 545.18h1.1M482.30 558.04h1.1M482.30 570.91h1.1M482.30 583.77h1.1M482.30 596.64h1.1M482.30 609.50h1.1M482.30 622.37h1.1M482.30 635.24h1.1M557.75 146.37h1.1M557.75 159.23h1.1M557.75 172.09h1.1M557.75 184.96h1.1M557.75 197.82h1.1M557.75 210.69h1.1M557.75 223.56h1.1M557.75 236.42h1.1M557.75 249.29h1.1M557.75 262.15h1.1M557.75 275.01h1.1M557.75 287.88h1.1M557.75 300.75h1.1M557.75 313.61h1.1M557.75 326.48h1.1M557.75 339.34h1.1M557.75 352.21h1.1M557.75 365.07h1.1M557.75 377.94h1.1M557.75 390.80h1.1M557.75 403.67h1.1M557.75 416.53h1.1M557.75 429.40h1.1M557.75 442.26h1.1M557.75 455.12h1.1M557.75 467.99h1.1M557.75 480.86h1.1M557.75 493.72h1.1M557.75 506.59h1.1M557.75 519.45h1.1M557.75 532.32h1.1M557.75 545.18h1.1M557.75 558.04h1.1M557.75 570.91h1.1M557.75 583.77h1.1M557.75 596.64h1.1M557.75 609.50h1.1M557.75 622.37h1.1M557.75 635.24h1.1M633.20 146.37h1.1M633.20 159.23h1.1M633.20 172.09h1.1M633.20 184.96h1.1M633.20 197.82h1.1M633.20 210.69h1.1M633.20 223.56h1.1M633.20 236.42h1.1M633.20 249.29h1.1M633.20 262.15h1.1M633.20 275.01h1.1M633.20 287.88h1.1M633.20 300.75h1.1M633.20 313.61h1.1M633.20 326.48h1.1M633.20 339.34h1.1M633.20 352.21h1.1M633.20 365.07h1.1M633.20 377.94h1.1M633.20 390.80h1.1M633.20 403.67h1.1M633.20 416.53h1.1M633.20 429.40h1.1M633.20 442.26h1.1M633.20 455.12h1.1M633.20 467.99h1.1M633.20 480.86h1.1M633.20 493.72h1.1M633.20 506.59h1.1M633.20 519.45h1.1M633.20 532.32h1.1M633.20 545.18h1.1M633.20 558.04h1.1M633.20 570.91h1.1M633.20 583.77h1.1M633.20 596.64h1.1M633.20 609.50h1.1M633.20 622.37h1.1M633.20 635.24h1.1M708.65 146.37h1.1M708.65 159.23h1.1M708.65 172.09h1.1M708.65 184.96h1.1M708.65 197.82h1.1M708.65 210.69h1.1M708.65 223.56h1.1M708.65 236.42h1.1M708.65 249.29h1.1M708.65 262.15h1.1M708.65 275.01h1.1M708.65 287.88h1.1M708.65 300.75h1.1M708.65 313.61h1.1M708.65 326.48h1.1M708.65 339.34h1.1M708.65 352.21h1.1M708.65 365.07h1.1M708.65 377.94h1.1M708.65 390.80h1.1M708.65 403.67h1.1M708.65 416.53h1.1M708.65 429.40h1.1M708.65 442.26h1.1M708.65 455.12h1.1M708.65 467.99h1.1M708.65 480.86h1.1M708.65 493.72h1.1M708.65 506.59h1.1M708.65 519.45h1.1M708.65 532.32h1.1M708.65 545.18h1.1M708.65 558.04h1.1M708.65 570.91h1.1M708.65 583.77h1.1M708.65 596.64h1.1M708.65 609.50h1.1M708.65 622.37h1.1M708.65 635.24h1.1M44.69 197.82h1.1M59.78 197.82h1.1M74.87 197.82h1.1M89.96 197.82h1.1M120.14 197.82h1.1M135.23 197.82h1.1M150.32 197.82h1.1M165.41 197.82h1.1M195.59 197.82h1.1M210.68 197.82h1.1M225.77 197.82h1.1M240.86 197.82h1.1M271.04 197.82h1.1M286.13 197.82h1.1M301.22 197.82h1.1M316.31 197.82h1.1M346.49 197.82h1.1M361.58 197.82h1.1M376.67 197.82h1.1M391.76 197.82h1.1M421.94 197.82h1.1M437.03 197.82h1.1M452.12 197.82h1.1M467.21 197.82h1.1M497.39 197.82h1.1M512.48 197.82h1.1M527.57 197.82h1.1M542.66 197.82h1.1M572.84 197.82h1.1M587.93 197.82h1.1M603.02 197.82h1.1M618.11 197.82h1.1M648.29 197.82h1.1M663.38 197.82h1.1M678.47 197.82h1.1M693.56 197.82h1.1M723.74 197.82h1.1M738.83 197.82h1.1M753.92 197.82h1.1M769.01 197.82h1.1M44.69 262.15h1.1M59.78 262.15h1.1M74.87 262.15h1.1M89.96 262.15h1.1M120.14 262.15h1.1M135.23 262.15h1.1M150.32 262.15h1.1M165.41 262.15h1.1M195.59 262.15h1.1M210.68 262.15h1.1M225.77 262.15h1.1M240.86 262.15h1.1M271.04 262.15h1.1M286.13 262.15h1.1M301.22 262.15h1.1M316.31 262.15h1.1M346.49 262.15h1.1M361.58 262.15h1.1M376.67 262.15h1.1M391.76 262.15h1.1M421.94 262.15h1.1M437.03 262.15h1.1M452.12 262.15h1.1M467.21 262.15h1.1M497.39 262.15h1.1M512.48 262.15h1.1M527.57 262.15h1.1M542.66 262.15h1.1M572.84 262.15h1.1M587.93 262.15h1.1M603.02 262.15h1.1M618.11 262.15h1.1M648.29 262.15h1.1M663.38 262.15h1.1M678.47 262.15h1.1M693.56 262.15h1.1M723.74 262.15h1.1M738.83 262.15h1.1M753.92 262.15h1.1M769.01 262.15h1.1M44.69 326.48h1.1M59.78 326.48h1.1M74.87 326.48h1.1M89.96 326.48h1.1M120.14 326.48h1.1M135.23 326.48h1.1M150.32 326.48h1.1M165.41 326.48h1.1M195.59 326.48h1.1M210.68 326.48h1.1M225.77 326.48h1.1M240.86 326.48h1.1M271.04 326.48h1.1M286.13 326.48h1.1M301.22 326.48h1.1M316.31 326.48h1.1M346.49 326.48h1.1M361.58 326.48h1.1M376.67 326.48h1.1M391.76 326.48h1.1M421.94 326.48h1.1M437.03 326.48h1.1M452.12 326.48h1.1M467.21 326.48h1.1M497.39 326.48h1.1M512.48 326.48h1.1M527.57 326.48h1.1M542.66 326.48h1.1M572.84 326.48h1.1M587.93 326.48h1.1M603.02 326.48h1.1M618.11 326.48h1.1M648.29 326.48h1.1M663.38 326.48h1.1M678.47 326.48h1.1M693.56 326.48h1.1M723.74 326.48h1.1M738.83 326.48h1.1M753.92 326.48h1.1M769.01 326.48h1.1M44.69 455.12h1.1M59.78 455.12h1.1M74.87 455.12h1.1M89.96 455.12h1.1M120.14 455.12h1.1M135.23 455.12h1.1M150.32 455.12h1.1M165.41 455.12h1.1M195.59 455.12h1.1M210.68 455.12h1.1M225.77 455.12h1.1M240.86 455.12h1.1M271.04 455.12h1.1M286.13 455.12h1.1M301.22 455.12h1.1M316.31 455.12h1.1M346.49 455.12h1.1M361.58 455.12h1.1M376.67 455.12h1.1M391.76 455.12h1.1M421.94 455.12h1.1M437.03 455.12h1.1M452.12 455.12h1.1M467.21 455.12h1.1M497.39 455.12h1.1M512.48 455.12h1.1M527.57 455.12h1.1M542.66 455.12h1.1M572.84 455.12h1.1M587.93 455.12h1.1M603.02 455.12h1.1M618.11 455.12h1.1M648.29 455.12h1.1M663.38 455.12h1.1M678.47 455.12h1.1M693.56 455.12h1.1M723.74 455.12h1.1M738.83 455.12h1.1M753.92 455.12h1.1M769.01 455.12h1.1M44.69 519.45h1.1M59.78 519.45h1.1M74.87 519.45h1.1M89.96 519.45h1.1M120.14 519.45h1.1M135.23 519.45h1.1M150.32 519.45h1.1M165.41 519.45h1.1M195.59 519.45h1.1M210.68 519.45h1.1M225.77 519.45h1.1M240.86 519.45h1.1M271.04 519.45h1.1M286.13 519.45h1.1M301.22 519.45h1.1M316.31 519.45h1.1M346.49 519.45h1.1M361.58 519.45h1.1M376.67 519.45h1.1M391.76 519.45h1.1M421.94 519.45h1.1M437.03 519.45h1.1M452.12 519.45h1.1M467.21 519.45h1.1M497.39 519.45h1.1M512.48 519.45h1.1M527.57 519.45h1.1M542.66 519.45h1.1M572.84 519.45h1.1M587.93 519.45h1.1M603.02 519.45h1.1M618.11 519.45h1.1M648.29 519.45h1.1M663.38 519.45h1.1M678.47 519.45h1.1M693.56 519.45h1.1M723.74 519.45h1.1M738.83 519.45h1.1M753.92 519.45h1.1M769.01 519.45h1.1M44.69 583.78h1.1M59.78 583.78h1.1M74.87 583.78h1.1M89.96 583.78h1.1M120.14 583.78h1.1M135.23 583.78h1.1M150.32 583.78h1.1M165.41 583.78h1.1M195.59 583.78h1.1M210.68 583.78h1.1M225.77 583.78h1.1M240.86 583.78h1.1M271.04 583.78h1.1M286.13 583.78h1.1M301.22 583.78h1.1M316.31 583.78h1.1M346.49 583.78h1.1M361.58 583.78h1.1M376.67 583.78h1.1M391.76 583.78h1.1M421.94 583.78h1.1M437.03 583.78h1.1M452.12 583.78h1.1M467.21 583.78h1.1M497.39 583.78h1.1M512.48 583.78h1.1M527.57 583.78h1.1M542.66 583.78h1.1M572.84 583.78h1.1M587.93 583.78h1.1M603.02 583.78h1.1M618.11 583.78h1.1M648.29 583.78h1.1M663.38 583.78h1.1M678.47 583.78h1.1M693.56 583.78h1.1M723.74 583.78h1.1M738.83 583.78h1.1M753.92 583.78h1.1M769.01 583.78h1.1" stroke="#bcbcbc" stroke-width="1.1" fill="none"/><rect x="30.00" y="133.50" width="755.70" height="514.60" fill="none" stroke="#e2e2e2" stroke-width="1.15"/><path d="M30.6 315.0L31.1 315.0L31.6 315.0L32.1 315.0L32.6 315.0L33.1 317.0L33.6 319.5L34.1 322.0L34.6 324.0L35.1 326.5L35.6 329.0L36.1 331.5L36.6 334.0L37.1 336.5L37.6 339.0L38.1 341.5L38.6 344.0L39.1 346.5L39.6 349.0L40.1 351.5L40.6 354.0L41.1 356.5L41.6 359.5L42.1 362.0L42.6 364.5L43.1 367.0L43.6 370.0L44.1 372.5L44.6 375.0L45.1 378.0L45.6 380.5L46.1 383.0L46.6 386.0L47.1 388.5L47.6 391.0L48.1 394.0L48.6 396.5L49.1 399.0L49.6 402.0L50.1 404.5L50.6 407.0L51.1 409.5L51.6 412.5L52.1 415.0L52.6 417.5L53.1 420.0L53.6 422.5L54.1 425.0L54.6 427.5L55.1 430.0L55.6 432.5L56.1 435.0L56.6 437.5L57.1 440.0L57.6 442.5L58.1 444.5L58.6 447.0L59.1 449.5L59.6 451.5L60.1 454.0L60.6 456.0L61.1 458.5L61.6 460.5L62.1 462.5L62.6 464.5L63.1 466.5L63.6 468.5L64.1 470.5L64.6 472.5L65.1 474.5L65.6 476.5L66.1 478.0L66.6 480.0L67.1 482.0L67.6 483.5L68.1 484.5L68.6 483.0L69.1 481.0L69.6 479.5L70.1 477.5L70.6 475.5L71.1 474.0L71.6 472.0L72.1 470.0L72.6 468.0L73.1 466.0L73.6 464.0L74.1 461.5L74.6 459.5L75.1 457.5L75.6 455.0L76.1 453.0L76.6 450.5L77.1 448.5L77.6 446.0L78.1 443.5L78.6 441.5L79.1 439.0L79.6 436.5L80.1 434.0L80.6 431.5L81.1 429.0L81.6 426.5L82.1 424.0L82.6 421.5L83.1 419.0L83.6 416.5L84.1 414.0L84.6 411.0L85.1 408.5L85.6 406.0L86.1 403.5L86.6 400.5L87.1 398.0L87.6 395.5L88.1 392.5L88.6 390.0L89.1 387.5L89.6 385.0L90.1 382.0L90.6 379.5L91.1 376.5L91.6 374.0L92.1 371.5L92.6 369.0L93.1 366.0L93.6 363.5L94.1 361.0L94.6 358.0L95.1 355.5L95.6 353.0L96.1 350.5L96.6 348.0L97.1 345.5L97.6 343.0L98.1 340.5L98.6 338.0L99.1 335.5L99.6 333.0L100.1 330.5L100.6 328.0L101.1 325.5L101.6 323.0L102.1 321.0L102.6 318.5L103.1 316.5L103.6 314.0L104.1 312.0L104.6 309.5L105.1 307.5L105.6 305.5L106.1 303.5L106.6 301.0L107.1 299.0L107.6 297.0L108.1 295.5L108.6 293.5L109.1 291.5L109.6 289.5L110.1 288.0L110.6 286.0L111.1 284.5L111.6 283.0L112.1 281.0L112.6 279.5L113.1 278.0L113.6 276.5L114.1 275.0L114.6 273.5L115.1 272.5L115.6 271.0L116.1 270.0L116.6 268.5L117.1 267.5L117.6 266.5L118.1 265.5L118.6 264.5L119.1 263.5L119.6 262.5L120.1 261.5L120.6 261.0L121.1 260.0L121.6 259.5L122.1 259.0L122.6 258.5L123.1 258.0L123.6 257.5L124.1 257.0L124.6 256.5L125.1 256.5L125.6 256.0L126.1 256.0L126.6 256.0L127.1 255.5L127.6 255.5L128.1 255.5L128.6 255.5L129.1 255.5L129.6 255.5L130.1 255.5L130.6 255.5L131.1 255.5L131.6 255.5L132.1 255.5L132.6 255.5L133.1 255.5L133.6 255.5L134.1 255.5L134.6 255.5L135.1 255.5L135.6 255.5L136.1 255.5L136.6 255.5L137.1 255.5L137.6 255.5L138.1 255.5L138.6 255.5L139.1 255.5L139.6 255.5L140.1 255.5L140.6 255.5L141.1 255.5L141.6 255.5L142.1 255.5L142.6 255.5L143.1 255.5L143.6 255.5L144.1 255.5L144.6 255.5L145.1 255.5L145.6 255.5L146.1 255.5L146.6 255.5L147.1 255.5L147.6 255.5L148.1 255.5L148.6 255.5L149.1 255.5L149.6 255.5L150.1 255.5L150.6 255.5L151.1 255.5L151.6 255.5L152.1 255.5L152.6 255.5L153.1 255.5L153.6 255.5L154.1 255.5L154.6 255.5L155.1 255.5L155.6 255.5L156.1 255.5L156.6 255.5L157.1 255.5L157.6 255.5L158.1 255.5L158.6 255.5L159.1 255.5L159.6 255.5L160.1 255.5L160.6 256.0L161.1 256.0L161.6 256.0L162.1 256.5L162.6 257.0L163.1 257.0L163.6 257.5L164.1 258.0L164.6 258.5L165.1 259.0L165.6 260.0L166.1 260.5L166.6 261.5L167.1 262.0L167.6 263.0L168.1 264.0L168.6 265.0L169.1 266.0L169.6 267.0L170.1 268.0L170.6 269.0L171.1 270.5L171.6 271.5L172.1 273.0L172.6 274.5L173.1 275.5L173.6 277.0L174.1 278.5L174.6 280.0L175.1 282.0L175.6 283.5L176.1 285.0L176.6 287.0L177.1 288.5L177.6 290.5L178.1 292.0L178.6 294.0L179.1 296.0L179.6 298.0L180.1 300.0L180.6 302.0L181.1 304.0L181.6 306.0L182.1 308.5L182.6 310.5L183.1 312.5L183.6 315.0L184.1 317.0L184.6 319.5L185.1 322.0L185.6 324.0L186.1 326.5L186.6 329.0L187.1 331.5L187.6 334.0L188.1 336.5L188.6 339.0L189.1 341.5L189.6 344.0L190.1 346.5L190.6 349.0L191.1 351.5L191.6 354.0L192.1 356.5L192.6 359.5L193.1 362.0L193.6 364.5L194.1 367.0L194.6 370.0L195.1 372.5L195.6 375.0L196.1 378.0L196.6 380.5L197.1 383.0L197.6 386.0L198.1 388.5L198.6 391.0L199.1 394.0L199.6 396.5L200.1 399.0L200.6 402.0L201.1 404.5L201.6 407.0L202.1 409.5L202.6 412.5L203.1 415.0L203.6 417.5L204.1 420.0L204.6 422.5L205.1 425.0L205.6 427.5L206.1 430.0L206.6 432.5L207.1 435.0L207.6 437.5L208.1 440.0L208.6 442.5L209.1 444.5L209.6 447.0L210.1 449.5L210.6 451.5L211.1 454.0L211.6 456.0L212.1 458.5L212.6 460.5L213.1 462.5L213.6 464.5L214.1 466.5L214.6 468.5L215.1 470.5L215.6 472.5L216.1 474.5L216.6 476.5L217.1 478.0L217.6 480.0L218.1 482.0L218.6 483.5L219.1 484.5L219.6 483.0L220.1 481.0L220.6 479.5L221.1 477.5L221.6 475.5L222.1 474.0L222.6 472.0L223.1 470.0L223.6 468.0L224.1 466.0L224.6 464.0L225.1 461.5L225.6 459.5L226.1 457.5L226.6 455.0L227.1 453.0L227.6 450.5L228.1 448.5L228.6 446.0L229.1 443.5L229.6 441.5L230.1 439.0L230.6 436.5L231.1 434.0L231.6 431.5L232.1 429.0L232.6 426.5L233.1 424.0L233.6 421.5L234.1 419.0L234.6 416.5L235.1 414.0L235.6 411.0L236.1 408.5L236.6 406.0L237.1 403.5L237.6 400.5L238.1 398.0L238.6 395.5L239.1 392.5L239.6 390.0L240.1 387.5L240.6 385.0L241.1 382.0L241.6 379.5L242.1 376.5L242.6 374.0L243.1 371.5L243.6 369.0L244.1 366.0L244.6 363.5L245.1 361.0L245.6 358.0L246.1 355.5L246.6 353.0L247.1 350.5L247.6 348.0L248.1 345.5L248.6 343.0L249.1 340.5L249.6 338.0L250.1 335.5L250.6 333.0L251.1 330.5L251.6 328.0L252.1 325.5L252.6 323.0L253.1 321.0L253.6 318.5L254.1 316.5L254.6 314.0L255.1 312.0L255.6 309.5L256.1 307.5L256.6 305.5L257.1 303.5L257.6 301.0L258.1 299.0L258.6 297.0L259.1 295.5L259.6 293.5L260.1 291.5L260.6 289.5L261.1 288.0L261.6 286.0L262.1 284.5L262.6 283.0L263.1 281.0L263.6 279.5L264.1 278.0L264.6 276.5L265.1 275.0L265.6 273.5L266.1 272.5L266.6 271.0L267.1 270.0L267.6 268.5L268.1 267.5L268.6 266.5L269.1 265.5L269.6 264.5L270.1 263.5L270.6 262.5L271.1 261.5L271.6 261.0L272.1 260.0L272.6 259.5L273.1 259.0L273.6 258.5L274.1 258.0L274.6 257.5L275.1 257.0L275.6 256.5L276.1 256.5L276.6 256.0L277.1 256.0L277.6 256.0L278.1 255.5L278.6 255.5L279.1 255.5L279.6 255.5L280.1 255.5L280.6 255.5L281.1 255.5L281.6 255.5L282.1 255.5L282.6 255.5L283.1 255.5L283.6 255.5L284.1 255.5L284.6 255.5L285.1 255.5L285.6 255.5L286.1 255.5L286.6 255.5L287.1 255.5L287.6 255.5L288.1 255.5L288.6 255.5L289.1 255.5L289.6 255.5L290.1 255.5L290.6 255.5L291.1 255.5L291.6 255.5L292.1 255.5L292.6 255.5L293.1 255.5L293.6 255.5L294.1 255.5L294.6 255.5L295.1 255.5L295.6 255.5L296.1 255.5L296.6 255.5L297.1 255.5L297.6 255.5L298.1 255.5L298.6 255.5L299.1 255.5L299.6 255.5L300.1 255.5L300.6 255.5L301.1 255.5L301.6 255.5L302.1 255.5L302.6 255.5L303.1 255.5L303.6 255.5L304.1 255.5L304.6 255.5L305.1 255.5L305.6 255.5L306.1 255.5L306.6 255.5L307.1 255.5L307.6 255.5L308.1 255.5L308.6 255.5L309.1 255.5L309.6 255.5L310.1 255.5L310.6 255.5L311.1 255.5L311.6 256.0L312.1 256.0L312.6 256.0L313.1 256.5L313.6 257.0L314.1 257.0L314.6 257.5L315.1 258.0L315.6 258.5L316.1 259.0L316.6 260.0L317.1 260.5L317.6 261.5L318.1 262.0L318.6 263.0L319.1 264.0L319.6 265.0L320.1 266.0L320.6 267.0L321.1 268.0L321.6 269.0L322.1 270.5L322.6 271.5L323.1 273.0L323.6 274.5L324.1 275.5L324.6 277.0L325.1 278.5L325.6 280.0L326.1 282.0L326.6 283.5L327.1 285.0L327.6 287.0L328.1 288.5L328.6 290.5L329.1 292.0L329.6 294.0L330.1 296.0L330.6 298.0L331.1 300.0L331.6 302.0L332.1 304.0L332.6 306.0L333.1 308.5L333.6 310.5L334.1 312.5L334.6 315.0L335.1 317.0L335.6 319.5L336.1 322.0L336.6 324.0L337.1 326.5L337.6 329.0L338.1 331.5L338.6 334.0L339.1 336.5L339.6 339.0L340.1 341.5L340.6 344.0L341.1 346.5L341.6 349.0L342.1 351.5L342.6 354.0L343.1 356.5L343.6 359.5L344.1 362.0L344.6 364.5L345.1 367.0L345.6 370.0L346.1 372.5L346.6 375.0L347.1 378.0L347.6 380.5L348.1 383.0L348.6 386.0L349.1 388.5L349.6 391.0L350.1 394.0L350.6 396.5L351.1 399.0L351.6 402.0L352.1 404.5L352.6 407.0L353.1 409.5L353.6 412.5L354.1 415.0L354.6 417.5L355.1 420.0L355.6 422.5L356.1 425.0L356.6 427.5L357.1 430.0L357.6 432.5L358.1 435.0L358.6 437.5L359.1 440.0L359.6 442.5L360.1 444.5L360.6 447.0L361.1 449.5L361.6 451.5L362.1 454.0L362.6 456.0L363.1 458.5L363.6 460.5L364.1 462.5L364.6 464.5L365.1 466.5L365.6 468.5L366.1 470.5L366.6 472.5L367.1 474.5L367.6 476.5L368.1 478.0L368.6 480.0L369.1 482.0L369.6 483.5L370.1 484.5L370.6 483.0L371.1 481.0L371.6 479.5L372.1 477.5L372.6 475.5L373.1 474.0L373.6 472.0L374.1 470.0L374.6 468.0L375.1 466.0L375.6 464.0L376.1 461.5L376.6 459.5L377.1 457.5L377.6 455.0L378.1 453.0L378.6 450.5L379.1 448.5L379.6 446.0L380.1 443.5L380.6 441.5L381.1 439.0L381.6 436.5L382.1 434.0L382.6 431.5L383.1 429.0L383.6 426.5L384.1 424.0L384.6 421.5L385.1 419.0L385.6 416.5L386.1 414.0L386.6 411.0L387.1 408.5L387.6 406.0L388.1 403.5L388.6 400.5L389.1 398.0L389.6 395.5L390.1 392.5L390.6 390.0L391.1 387.5L391.6 385.0L392.1 382.0L392.6 379.5L393.1 376.5L393.6 374.0L394.1 371.5L394.6 369.0L395.1 366.0L395.6 363.5L396.1 361.0L396.6 358.0L397.1 355.5L397.6 353.0L398.1 350.5L398.6 348.0L399.1 345.5L399.6 343.0L400.1 340.5L400.6 338.0L401.1 335.5L401.6 333.0L402.1 330.5L402.6 328.0L403.1 325.5L403.6 323.0L404.1 321.0L404.6 318.5L405.1 316.5L405.6 314.0L406.1 312.0L406.6 309.5L407.1 307.5L407.6 305.5L408.1 303.5L408.6 301.0L409.1 299.0L409.6 297.0L410.1 295.5L410.6 293.5L411.1 291.5L411.6 289.5L412.1 288.0L412.6 286.0L413.1 284.5L413.6 283.0L414.1 281.0L414.6 279.5L415.1 278.0L415.6 276.5L416.1 275.0L416.6 273.5L417.1 272.5L417.6 271.0L418.1 270.0L418.6 268.5L419.1 267.5L419.6 266.5L420.1 265.5L420.6 264.5L421.1 263.5L421.6 262.5L422.1 261.5L422.6 261.0L423.1 260.0L423.6 259.5L424.1 259.0L424.6 258.5L425.1 258.0L425.6 257.5L426.1 257.0L426.6 256.5L427.1 256.5L427.6 256.0L428.1 256.0L428.6 256.0L429.1 255.5L429.6 255.5L430.1 255.5L430.6 255.5L431.1 255.5L431.6 255.5L432.1 255.5L432.6 255.5L433.1 255.5L433.6 255.5L434.1 255.5L434.6 255.5L435.1 255.5L435.6 255.5L436.1 255.5L436.6 255.5L437.1 255.5L437.6 255.5L438.1 255.5L438.6 255.5L439.1 255.5L439.6 255.5L440.1 255.5L440.6 255.5L441.1 255.5L441.6 255.5L442.1 255.5L442.6 255.5L443.1 255.5L443.6 255.5L444.1 255.5L444.6 255.5L445.1 255.5L445.6 255.5L446.1 255.5L446.6 255.5L447.1 255.5L447.6 255.5L448.1 255.5L448.6 255.5L449.1 255.5L449.6 255.5L450.1 255.5L450.6 255.5L451.1 255.5L451.6 255.5L452.1 255.5L452.6 255.5L453.1 255.5L453.6 255.5L454.1 255.5L454.6 255.5L455.1 255.5L455.6 255.5L456.1 255.5L456.6 255.5L457.1 255.5L457.6 255.5L458.1 255.5L458.6 255.5L459.1 255.5L459.6 255.5L460.1 255.5L460.6 255.5L461.1 255.5L461.6 255.5L462.1 255.5L462.6 256.0L463.1 256.0L463.6 256.0L464.1 256.5L464.6 257.0L465.1 257.0L465.6 257.5L466.1 258.0L466.6 258.5L467.1 259.0L467.6 260.0L468.1 260.5L468.6 261.5L469.1 262.0L469.6 263.0L470.1 264.0L470.6 265.0L471.1 266.0L471.6 267.0L472.1 268.0L472.6 269.0L473.1 270.5L473.6 271.5L474.1 273.0L474.6 274.5L475.1 275.5L475.6 277.0L476.1 278.5L476.6 280.0L477.1 282.0L477.6 283.5L478.1 285.0L478.6 287.0L479.1 288.5L479.6 290.5L480.1 292.0L480.6 294.0L481.1 296.0L481.6 298.0L482.1 300.0L482.6 302.0L483.1 304.0L483.6 306.0L484.1 308.5L484.6 310.5L485.1 312.5L485.6 315.0L486.1 317.0L486.6 319.5L487.1 322.0L487.6 324.0L488.1 326.5L488.6 329.0L489.1 331.5L489.6 334.0L490.1 336.5L490.6 339.0L491.1 341.5L491.6 344.0L492.1 346.5L492.6 349.0L493.1 351.5L493.6 354.0L494.1 356.5L494.6 359.5L495.1 362.0L495.6 364.5L496.1 367.0L496.6 370.0L497.1 372.5L497.6 375.0L498.1 378.0L498.6 380.5L499.1 383.0L499.6 386.0L500.1 388.5L500.6 391.0L501.1 394.0L501.6 396.5L502.1 399.0L502.6 402.0L503.1 404.5L503.6 407.0L504.1 409.5L504.6 412.5L505.1 415.0L505.6 417.5L506.1 420.0L506.6 422.5L507.1 425.0L507.6 427.5L508.1 430.0L508.6 432.5L509.1 435.0L509.6 437.5L510.1 440.0L510.6 442.5L511.1 444.5L511.6 447.0L512.1 449.5L512.6 451.5L513.1 454.0L513.6 456.0L514.1 458.5L514.6 460.5L515.1 462.5L515.6 464.5L516.1 466.5L516.6 468.5L517.1 470.5L517.6 472.5L518.1 474.5L518.6 476.5L519.1 478.0L519.6 480.0L520.1 482.0L520.6 483.5L521.1 484.5L521.6 483.0L522.1 481.0L522.6 479.5L523.1 477.5L523.6 475.5L524.1 474.0L524.6 472.0L525.1 470.0L525.6 468.0L526.1 466.0L526.6 464.0L527.1 461.5L527.6 459.5L528.1 457.5L528.6 455.0L529.1 453.0L529.6 450.5L530.1 448.5L530.6 446.0L531.1 443.5L531.6 441.5L532.1 439.0L532.6 436.5L533.1 434.0L533.6 431.5L534.1 429.0L534.6 426.5L535.1 424.0L535.6 421.5L536.1 419.0L536.6 416.5L537.1 414.0L537.6 411.0L538.1 408.5L538.6 406.0L539.1 403.5L539.6 400.5L540.1 398.0L540.6 395.5L541.1 392.5L541.6 390.0L542.1 387.5L542.6 385.0L543.1 382.0L543.6 379.5L544.1 376.5L544.6 374.0L545.1 371.5L545.6 369.0L546.1 366.0L546.6 363.5L547.1 361.0L547.6 358.0L548.1 355.5L548.6 353.0L549.1 350.5L549.6 348.0L550.1 345.5L550.6 343.0L551.1 340.5L551.6 338.0L552.1 335.5L552.6 333.0L553.1 330.5L553.6 328.0L554.1 325.5L554.6 323.0L555.1 321.0L555.6 318.5L556.1 316.5L556.6 314.0L557.1 312.0L557.6 309.5L558.1 307.5L558.6 305.5L559.1 303.5L559.6 301.0L560.1 299.0L560.6 297.0L561.1 295.5L561.6 293.5L562.1 291.5L562.6 289.5L563.1 288.0L563.6 286.0L564.1 284.5L564.6 283.0L565.1 281.0L565.6 279.5L566.1 278.0L566.6 276.5L567.1 275.0L567.6 273.5L568.1 272.5L568.6 271.0L569.1 270.0L569.6 268.5L570.1 267.5L570.6 266.5L571.1 265.5L571.6 264.5L572.1 263.5L572.6 262.5L573.1 261.5L573.6 261.0L574.1 260.0L574.6 259.5L575.1 259.0L575.6 258.5L576.1 258.0L576.6 257.5L577.1 257.0L577.6 256.5L578.1 256.5L578.6 256.0L579.1 256.0L579.6 256.0L580.1 255.5L580.6 255.5L581.1 255.5L581.6 255.5L582.1 255.5L582.6 255.5L583.1 255.5L583.6 255.5L584.1 255.5L584.6 255.5L585.1 255.5L585.6 255.5L586.1 255.5L586.6 255.5L587.1 255.5L587.6 255.5L588.1 255.5L588.6 255.5L589.1 255.5L589.6 255.5L590.1 255.5L590.6 255.5L591.1 255.5L591.6 255.5L592.1 255.5L592.6 255.5L593.1 255.5L593.6 255.5L594.1 255.5L594.6 255.5L595.1 255.5L595.6 255.5L596.1 255.5L596.6 255.5L597.1 255.5L597.6 255.5L598.1 255.5L598.6 255.5L599.1 255.5L599.6 255.5L600.1 255.5L600.6 255.5L601.1 255.5L601.6 255.5L602.1 255.5L602.6 255.5L603.1 255.5L603.6 255.5L604.1 255.5L604.6 255.5L605.1 255.5L605.6 255.5L606.1 255.5L606.6 255.5L607.1 255.5L607.6 255.5L608.1 255.5L608.6 255.5L609.1 255.5L609.6 255.5L610.1 255.5L610.6 255.5L611.1 255.5L611.6 255.5L612.1 255.5L612.6 255.5L613.1 255.5L613.6 256.0L614.1 256.0L614.6 256.0L615.1 256.5L615.6 257.0L616.1 257.0L616.6 257.5L617.1 258.0L617.6 258.5L618.1 259.0L618.6 260.0L619.1 260.5L619.6 261.5L620.1 262.0L620.6 263.0L621.1 264.0L621.6 265.0L622.1 266.0L622.6 267.0L623.1 268.0L623.6 269.0L624.1 270.5L624.6 271.5L625.1 273.0L625.6 274.5L626.1 275.5L626.6 277.0L627.1 278.5L627.6 280.0L628.1 282.0L628.6 283.5L629.1 285.0L629.6 287.0L630.1 288.5L630.6 290.5L631.1 292.0L631.6 294.0L632.1 296.0L632.6 298.0L633.1 300.0L633.6 302.0L634.1 304.0L634.6 306.0L635.1 308.5L635.6 310.5L636.1 312.5L636.6 315.0L637.1 317.0L637.6 319.5L638.1 322.0L638.6 324.0L639.1 326.5L639.6 329.0L640.1 331.5L640.6 334.0L641.1 336.5L641.6 339.0L642.1 341.5L642.6 344.0L643.1 346.5L643.6 349.0L644.1 351.5L644.6 354.0L645.1 356.5L645.6 359.5L646.1 362.0L646.6 364.5L647.1 367.0L647.6 370.0L648.1 372.5L648.6 375.0L649.1 378.0L649.6 380.5L650.1 383.0L650.6 386.0L651.1 388.5L651.6 391.0L652.1 394.0L652.6 396.5L653.1 399.0L653.6 402.0L654.1 404.5L654.6 407.0L655.1 409.5L655.6 412.5L656.1 415.0L656.6 417.5L657.1 420.0L657.6 422.5L658.1 425.0L658.6 427.5L659.1 430.0L659.6 432.5L660.1 435.0L660.6 437.5L661.1 440.0L661.6 442.5L662.1 444.5L662.6 447.0L663.1 449.5L663.6 451.5L664.1 454.0L664.6 456.0L665.1 458.5L665.6 460.5L666.1 462.5L666.6 464.5L667.1 466.5L667.6 468.5L668.1 470.5L668.6 472.5L669.1 474.5L669.6 476.5L670.1 478.0L670.6 480.0L671.1 482.0L671.6 483.5L672.1 484.5L672.6 483.0L673.1 481.0L673.6 479.5L674.1 477.5L674.6 475.5L675.1 474.0L675.6 472.0L676.1 470.0L676.6 468.0L677.1 466.0L677.6 464.0L678.1 461.5L678.6 459.5L679.1 457.5L679.6 455.0L680.1 453.0L680.6 450.5L681.1 448.5L681.6 446.0L682.1 443.5L682.6 441.5L683.1 439.0L683.6 436.5L684.1 434.0L684.6 431.5L685.1 429.0L685.6 426.5L686.1 424.0L686.6 421.5L687.1 419.0L687.6 416.5L688.1 414.0L688.6 411.0L689.1 408.5L689.6 406.0L690.1 403.5L690.6 400.5L691.1 398.0L691.6 395.5L692.1 392.5L692.6 390.0L693.1 387.5L693.6 385.0L694.1 382.0L694.6 379.5L695.1 376.5L695.6 374.0L696.1 371.5L696.6 369.0L697.1 366.0L697.6 363.5L698.1 361.0L698.6 358.0L699.1 355.5L699.6 353.0L700.1 350.5L700.6 348.0L701.1 345.5L701.6 343.0L702.1 340.5L702.6 338.0L703.1 335.5L703.6 333.0L704.1 330.5L704.6 328.0L705.1 325.5L705.6 323.0L706.1 321.0L706.6 318.5L707.1 316.5L707.6 314.0L708.1 312.0L708.6 309.5L709.1 307.5L709.6 305.5L710.1 303.5L710.6 301.0L711.1 299.0L711.6 297.0L712.1 295.5L712.6 293.5L713.1 291.5L713.6 289.5L714.1 288.0L714.6 286.0L715.1 284.5L715.6 283.0L716.1 281.0L716.6 279.5L717.1 278.0L717.6 276.5L718.1 275.0L718.6 273.5L719.1 272.5L719.6 271.0L720.1 270.0L720.6 268.5L721.1 267.5L721.6 266.5L722.1 265.5L722.6 264.5L723.1 263.5L723.6 262.5L724.1 261.5L724.6 261.0L725.1 260.0L725.6 259.5L726.1 259.0L726.6 258.5L727.1 258.0L727.6 257.5L728.1 257.0L728.6 256.5L729.1 256.5L729.6 256.0L730.1 256.0L730.6 256.0L731.1 255.5L731.6 255.5L732.1 255.5L732.6 255.5L733.1 255.5L733.6 255.5L734.1 255.5L734.6 255.5L735.1 255.5L735.6 255.5L736.1 255.5L736.6 255.5L737.1 255.5L737.6 255.5L738.1 255.5L738.6 255.5L739.1 255.5L739.6 255.5L740.1 255.5L740.6 255.5L741.1 255.5L741.6 255.5L742.1 255.5L742.6 255.5L743.1 255.5L743.6 255.5L744.1 255.5L744.6 255.5L745.1 255.5L745.6 255.5L746.1 255.5L746.6 255.5L747.1 255.5L747.6 255.5L748.1 255.5L748.6 255.5L749.1 255.5L749.6 255.5L750.1 255.5L750.6 255.5L751.1 255.5L751.6 255.5L752.1 255.5L752.6 255.5L753.1 255.5L753.6 255.5L754.1 255.5L754.6 255.5L755.1 255.5L755.6 255.5L756.1 255.5L756.6 255.5L757.1 255.5L757.6 255.5L758.1 255.5L758.6 255.5L759.1 255.5L759.6 255.5L760.1 255.5L760.6 255.5L761.1 255.5L761.6 255.5L762.1 255.5L762.6 255.5L763.1 255.5L763.6 255.5L764.1 255.5L764.6 256.0L765.1 256.0L765.6 256.0L766.1 256.5L766.6 257.0L767.1 257.0L767.6 257.5L768.1 258.0L768.6 258.5L769.1 259.0L769.6 260.0L770.1 260.5L770.6 261.5L771.1 262.0L771.6 263.0L772.1 264.0L772.6 265.0L773.1 266.0L773.6 267.0L774.1 268.0L774.6 269.0L775.1 270.5L775.6 271.5L776.1 273.0L776.6 274.5L777.1 275.5L777.6 277.0L778.1 278.5L778.6 280.0L779.1 282.0L779.6 283.5L780.1 285.0L780.6 287.0L781.1 288.5L781.6 290.5L782.1 292.0L782.6 294.0L783.1 296.0L783.6 298.0L784.1 300.0L784.6 302.0L785.1 304.0L785.2 304.5L785.2 474.5L785.1 474.5L784.6 474.5L784.1 474.5L783.6 474.5L783.1 474.5L782.6 474.5L782.1 474.0L781.6 472.0L781.1 469.5L780.6 467.0L780.1 464.5L779.6 462.5L779.1 460.0L778.6 457.5L778.1 455.0L777.6 452.5L777.1 450.0L776.6 447.5L776.1 445.0L775.6 442.0L775.1 439.5L774.6 437.0L774.1 434.5L773.6 432.0L773.1 429.0L772.6 426.5L772.1 424.0L771.6 421.5L771.1 418.5L770.6 416.0L770.1 413.5L769.6 410.5L769.1 408.0L768.6 405.5L768.1 402.5L767.6 400.0L767.1 397.5L766.6 394.5L766.1 392.0L765.6 389.5L765.1 386.5L764.6 384.0L764.1 381.5L763.6 379.0L763.1 376.5L762.6 373.5L762.1 371.0L761.6 368.5L761.1 366.0L760.6 363.5L760.1 361.0L759.6 358.5L759.1 356.0L758.6 354.0L758.1 351.5L757.6 349.0L757.1 346.5L756.6 344.5L756.1 342.0L755.6 340.0L755.1 337.5L754.6 335.5L754.1 333.0L753.6 331.0L753.1 329.0L752.6 327.0L752.1 325.0L751.6 323.0L751.1 321.0L750.6 319.0L750.1 317.0L749.6 315.0L749.1 313.5L748.6 311.5L748.1 310.0L747.6 308.0L747.1 309.0L746.6 311.0L746.1 312.5L745.6 314.5L745.1 316.5L744.6 318.0L744.1 320.0L743.6 322.0L743.1 324.0L742.6 326.0L742.1 328.0L741.6 330.0L741.1 332.5L740.6 334.5L740.1 336.5L739.6 339.0L739.1 341.0L738.6 343.5L738.1 345.5L737.6 348.0L737.1 350.5L736.6 353.0L736.1 355.0L735.6 357.5L735.1 360.0L734.6 362.5L734.1 365.0L733.6 367.5L733.1 370.0L732.6 372.5L732.1 375.5L731.6 378.0L731.1 380.5L730.6 383.0L730.1 385.5L729.6 388.5L729.1 391.0L728.6 393.5L728.1 396.0L727.6 399.0L727.1 401.5L726.6 404.0L726.1 407.0L725.6 409.5L725.1 412.0L724.6 415.0L724.1 417.5L723.6 420.0L723.1 423.0L722.6 425.5L722.1 428.0L721.6 431.0L721.1 433.5L720.6 436.0L720.1 438.5L719.6 441.0L719.1 444.0L718.6 446.5L718.1 449.0L717.6 451.5L717.1 454.0L716.6 456.5L716.1 459.0L715.6 461.5L715.1 463.5L714.6 466.0L714.1 468.5L713.6 471.0L713.1 473.0L712.6 475.5L712.1 477.5L711.6 480.0L711.1 482.0L710.6 484.5L710.1 486.5L709.6 488.5L709.1 490.5L708.6 492.5L708.1 494.5L707.6 496.5L707.1 498.5L706.6 500.5L706.1 502.5L705.6 504.0L705.1 506.0L704.6 507.5L704.1 509.5L703.6 511.0L703.1 512.5L702.6 514.0L702.1 515.5L701.6 517.0L701.1 518.5L700.6 520.0L700.1 521.0L699.6 522.5L699.1 523.5L698.6 524.5L698.1 526.0L697.6 527.0L697.1 528.0L696.6 529.0L696.1 530.0L695.6 530.5L695.1 531.5L694.6 532.0L694.1 533.0L693.6 533.5L693.1 534.0L692.6 534.5L692.1 535.0L691.6 535.5L691.1 536.0L690.6 536.5L690.1 536.5L689.6 536.5L689.1 537.0L688.6 537.0L688.1 537.0L687.6 537.0L687.1 537.0L686.6 537.0L686.1 537.0L685.6 537.0L685.1 537.0L684.6 537.0L684.1 537.0L683.6 537.0L683.1 537.0L682.6 537.0L682.1 537.0L681.6 537.0L681.1 537.0L680.6 537.0L680.1 537.0L679.6 537.0L679.1 537.0L678.6 537.0L678.1 537.0L677.6 537.0L677.1 537.0L676.6 537.0L676.1 537.0L675.6 537.0L675.1 537.0L674.6 537.0L674.1 537.0L673.6 537.0L673.1 537.0L672.6 537.0L672.1 537.0L671.6 537.0L671.1 537.0L670.6 537.0L670.1 537.0L669.6 537.0L669.1 537.0L668.6 537.0L668.1 537.0L667.6 537.0L667.1 537.0L666.6 537.0L666.1 537.0L665.6 537.0L665.1 537.0L664.6 537.0L664.1 537.0L663.6 537.0L663.1 537.0L662.6 537.0L662.1 537.0L661.6 537.0L661.1 537.0L660.6 537.0L660.1 537.0L659.6 537.0L659.1 537.0L658.6 537.0L658.1 537.0L657.6 537.0L657.1 537.0L656.6 537.0L656.1 537.0L655.6 537.0L655.1 537.0L654.6 537.0L654.1 536.5L653.6 536.5L653.1 536.0L652.6 535.5L652.1 535.5L651.6 535.0L651.1 534.5L650.6 534.0L650.1 533.0L649.6 532.5L649.1 532.0L648.6 531.0L648.1 530.0L647.6 529.0L647.1 528.5L646.6 527.5L646.1 526.5L645.6 525.0L645.1 524.0L644.6 523.0L644.1 521.5L643.6 520.5L643.1 519.0L642.6 517.5L642.1 516.0L641.6 514.5L641.1 513.0L640.6 511.5L640.1 510.0L639.6 508.5L639.1 506.5L638.6 505.0L638.1 503.0L637.6 501.0L637.1 499.5L636.6 497.5L636.1 495.5L635.6 493.5L635.1 491.5L634.6 489.5L634.1 487.5L633.6 485.0L633.1 483.0L632.6 481.0L632.1 478.5L631.6 476.5L631.1 474.0L630.6 472.0L630.1 469.5L629.6 467.0L629.1 464.5L628.6 462.5L628.1 460.0L627.6 457.5L627.1 455.0L626.6 452.5L626.1 450.0L625.6 447.5L625.1 445.0L624.6 442.0L624.1 439.5L623.6 437.0L623.1 434.5L622.6 432.0L622.1 429.0L621.6 426.5L621.1 424.0L620.6 421.5L620.1 418.5L619.6 416.0L619.1 413.5L618.6 410.5L618.1 408.0L617.6 405.5L617.1 402.5L616.6 400.0L616.1 397.5L615.6 394.5L615.1 392.0L614.6 389.5L614.1 386.5L613.6 384.0L613.1 381.5L612.6 379.0L612.1 376.5L611.6 373.5L611.1 371.0L610.6 368.5L610.1 366.0L609.6 363.5L609.1 361.0L608.6 358.5L608.1 356.0L607.6 354.0L607.1 351.5L606.6 349.0L606.1 346.5L605.6 344.5L605.1 342.0L604.6 340.0L604.1 337.5L603.6 335.5L603.1 333.0L602.6 331.0L602.1 329.0L601.6 327.0L601.1 325.0L600.6 323.0L600.1 321.0L599.6 319.0L599.1 317.0L598.6 315.0L598.1 313.5L597.6 311.5L597.1 310.0L596.6 308.0L596.1 309.0L595.6 311.0L595.1 312.5L594.6 314.5L594.1 316.5L593.6 318.0L593.1 320.0L592.6 322.0L592.1 324.0L591.6 326.0L591.1 328.0L590.6 330.0L590.1 332.5L589.6 334.5L589.1 336.5L588.6 339.0L588.1 341.0L587.6 343.5L587.1 345.5L586.6 348.0L586.1 350.5L585.6 353.0L585.1 355.0L584.6 357.5L584.1 360.0L583.6 362.5L583.1 365.0L582.6 367.5L582.1 370.0L581.6 372.5L581.1 375.5L580.6 378.0L580.1 380.5L579.6 383.0L579.1 385.5L578.6 388.5L578.1 391.0L577.6 393.5L577.1 396.0L576.6 399.0L576.1 401.5L575.6 404.0L575.1 407.0L574.6 409.5L574.1 412.0L573.6 415.0L573.1 417.5L572.6 420.0L572.1 423.0L571.6 425.5L571.1 428.0L570.6 431.0L570.1 433.5L569.6 436.0L569.1 438.5L568.6 441.0L568.1 444.0L567.6 446.5L567.1 449.0L566.6 451.5L566.1 454.0L565.6 456.5L565.1 459.0L564.6 461.5L564.1 463.5L563.6 466.0L563.1 468.5L562.6 471.0L562.1 473.0L561.6 475.5L561.1 477.5L560.6 480.0L560.1 482.0L559.6 484.5L559.1 486.5L558.6 488.5L558.1 490.5L557.6 492.5L557.1 494.5L556.6 496.5L556.1 498.5L555.6 500.5L555.1 502.5L554.6 504.0L554.1 506.0L553.6 507.5L553.1 509.5L552.6 511.0L552.1 512.5L551.6 514.0L551.1 515.5L550.6 517.0L550.1 518.5L549.6 520.0L549.1 521.0L548.6 522.5L548.1 523.5L547.6 524.5L547.1 526.0L546.6 527.0L546.1 528.0L545.6 529.0L545.1 530.0L544.6 530.5L544.1 531.5L543.6 532.0L543.1 533.0L542.6 533.5L542.1 534.0L541.6 534.5L541.1 535.0L540.6 535.5L540.1 536.0L539.6 536.5L539.1 536.5L538.6 536.5L538.1 537.0L537.6 537.0L537.1 537.0L536.6 537.0L536.1 537.0L535.6 537.0L535.1 537.0L534.6 537.0L534.1 537.0L533.6 537.0L533.1 537.0L532.6 537.0L532.1 537.0L531.6 537.0L531.1 537.0L530.6 537.0L530.1 537.0L529.6 537.0L529.1 537.0L528.6 537.0L528.1 537.0L527.6 537.0L527.1 537.0L526.6 537.0L526.1 537.0L525.6 537.0L525.1 537.0L524.6 537.0L524.1 537.0L523.6 537.0L523.1 537.0L522.6 537.0L522.1 537.0L521.6 537.0L521.1 537.0L520.6 537.0L520.1 537.0L519.6 537.0L519.1 537.0L518.6 537.0L518.1 537.0L517.6 537.0L517.1 537.0L516.6 537.0L516.1 537.0L515.6 537.0L515.1 537.0L514.6 537.0L514.1 537.0L513.6 537.0L513.1 537.0L512.6 537.0L512.1 537.0L511.6 537.0L511.1 537.0L510.6 537.0L510.1 537.0L509.6 537.0L509.1 537.0L508.6 537.0L508.1 537.0L507.6 537.0L507.1 537.0L506.6 537.0L506.1 537.0L505.6 537.0L505.1 537.0L504.6 537.0L504.1 537.0L503.6 537.0L503.1 536.5L502.6 536.5L502.1 536.0L501.6 535.5L501.1 535.5L500.6 535.0L500.1 534.5L499.6 534.0L499.1 533.0L498.6 532.5L498.1 532.0L497.6 531.0L497.1 530.0L496.6 529.0L496.1 528.5L495.6 527.5L495.1 526.5L494.6 525.0L494.1 524.0L493.6 523.0L493.1 521.5L492.6 520.5L492.1 519.0L491.6 517.5L491.1 516.0L490.6 514.5L490.1 513.0L489.6 511.5L489.1 510.0L488.6 508.5L488.1 506.5L487.6 505.0L487.1 503.0L486.6 501.0L486.1 499.5L485.6 497.5L485.1 495.5L484.6 493.5L484.1 491.5L483.6 489.5L483.1 487.5L482.6 485.0L482.1 483.0L481.6 481.0L481.1 478.5L480.6 476.5L480.1 474.0L479.6 472.0L479.1 469.5L478.6 467.0L478.1 464.5L477.6 462.5L477.1 460.0L476.6 457.5L476.1 455.0L475.6 452.5L475.1 450.0L474.6 447.5L474.1 445.0L473.6 442.0L473.1 439.5L472.6 437.0L472.1 434.5L471.6 432.0L471.1 429.0L470.6 426.5L470.1 424.0L469.6 421.5L469.1 418.5L468.6 416.0L468.1 413.5L467.6 410.5L467.1 408.0L466.6 405.5L466.1 402.5L465.6 400.0L465.1 397.5L464.6 394.5L464.1 392.0L463.6 389.5L463.1 386.5L462.6 384.0L462.1 381.5L461.6 379.0L461.1 376.5L460.6 373.5L460.1 371.0L459.6 368.5L459.1 366.0L458.6 363.5L458.1 361.0L457.6 358.5L457.1 356.0L456.6 354.0L456.1 351.5L455.6 349.0L455.1 346.5L454.6 344.5L454.1 342.0L453.6 340.0L453.1 337.5L452.6 335.5L452.1 333.0L451.6 331.0L451.1 329.0L450.6 327.0L450.1 325.0L449.6 323.0L449.1 321.0L448.6 319.0L448.1 317.0L447.6 315.0L447.1 313.5L446.6 311.5L446.1 310.0L445.6 308.0L445.1 309.0L444.6 311.0L444.1 312.5L443.6 314.5L443.1 316.5L442.6 318.0L442.1 320.0L441.6 322.0L441.1 324.0L440.6 326.0L440.1 328.0L439.6 330.0L439.1 332.5L438.6 334.5L438.1 336.5L437.6 339.0L437.1 341.0L436.6 343.5L436.1 345.5L435.6 348.0L435.1 350.5L434.6 353.0L434.1 355.0L433.6 357.5L433.1 360.0L432.6 362.5L432.1 365.0L431.6 367.5L431.1 370.0L430.6 372.5L430.1 375.5L429.6 378.0L429.1 380.5L428.6 383.0L428.1 385.5L427.6 388.5L427.1 391.0L426.6 393.5L426.1 396.0L425.6 399.0L425.1 401.5L424.6 404.0L424.1 407.0L423.6 409.5L423.1 412.0L422.6 415.0L422.1 417.5L421.6 420.0L421.1 423.0L420.6 425.5L420.1 428.0L419.6 431.0L419.1 433.5L418.6 436.0L418.1 438.5L417.6 441.0L417.1 444.0L416.6 446.5L416.1 449.0L415.6 451.5L415.1 454.0L414.6 456.5L414.1 459.0L413.6 461.5L413.1 463.5L412.6 466.0L412.1 468.5L411.6 471.0L411.1 473.0L410.6 475.5L410.1 477.5L409.6 480.0L409.1 482.0L408.6 484.5L408.1 486.5L407.6 488.5L407.1 490.5L406.6 492.5L406.1 494.5L405.6 496.5L405.1 498.5L404.6 500.5L404.1 502.5L403.6 504.0L403.1 506.0L402.6 507.5L402.1 509.5L401.6 511.0L401.1 512.5L400.6 514.0L400.1 515.5L399.6 517.0L399.1 518.5L398.6 520.0L398.1 521.0L397.6 522.5L397.1 523.5L396.6 524.5L396.1 526.0L395.6 527.0L395.1 528.0L394.6 529.0L394.1 530.0L393.6 530.5L393.1 531.5L392.6 532.0L392.1 533.0L391.6 533.5L391.1 534.0L390.6 534.5L390.1 535.0L389.6 535.5L389.1 536.0L388.6 536.5L388.1 536.5L387.6 536.5L387.1 537.0L386.6 537.0L386.1 537.0L385.6 537.0L385.1 537.0L384.6 537.0L384.1 537.0L383.6 537.0L383.1 537.0L382.6 537.0L382.1 537.0L381.6 537.0L381.1 537.0L380.6 537.0L380.1 537.0L379.6 537.0L379.1 537.0L378.6 537.0L378.1 537.0L377.6 537.0L377.1 537.0L376.6 537.0L376.1 537.0L375.6 537.0L375.1 537.0L374.6 537.0L374.1 537.0L373.6 537.0L373.1 537.0L372.6 537.0L372.1 537.0L371.6 537.0L371.1 537.0L370.6 537.0L370.1 537.0L369.6 537.0L369.1 537.0L368.6 537.0L368.1 537.0L367.6 537.0L367.1 537.0L366.6 537.0L366.1 537.0L365.6 537.0L365.1 537.0L364.6 537.0L364.1 537.0L363.6 537.0L363.1 537.0L362.6 537.0L362.1 537.0L361.6 537.0L361.1 537.0L360.6 537.0L360.1 537.0L359.6 537.0L359.1 537.0L358.6 537.0L358.1 537.0L357.6 537.0L357.1 537.0L356.6 537.0L356.1 537.0L355.6 537.0L355.1 537.0L354.6 537.0L354.1 537.0L353.6 537.0L353.1 537.0L352.6 537.0L352.1 536.5L351.6 536.5L351.1 536.0L350.6 535.5L350.1 535.5L349.6 535.0L349.1 534.5L348.6 534.0L348.1 533.0L347.6 532.5L347.1 532.0L346.6 531.0L346.1 530.0L345.6 529.0L345.1 528.5L344.6 527.5L344.1 526.5L343.6 525.0L343.1 524.0L342.6 523.0L342.1 521.5L341.6 520.5L341.1 519.0L340.6 517.5L340.1 516.0L339.6 514.5L339.1 513.0L338.6 511.5L338.1 510.0L337.6 508.5L337.1 506.5L336.6 505.0L336.1 503.0L335.6 501.0L335.1 499.5L334.6 497.5L334.1 495.5L333.6 493.5L333.1 491.5L332.6 489.5L332.1 487.5L331.6 485.0L331.1 483.0L330.6 481.0L330.1 478.5L329.6 476.5L329.1 474.0L328.6 472.0L328.1 469.5L327.6 467.0L327.1 464.5L326.6 462.5L326.1 460.0L325.6 457.5L325.1 455.0L324.6 452.5L324.1 450.0L323.6 447.5L323.1 445.0L322.6 442.0L322.1 439.5L321.6 437.0L321.1 434.5L320.6 432.0L320.1 429.0L319.6 426.5L319.1 424.0L318.6 421.5L318.1 418.5L317.6 416.0L317.1 413.5L316.6 410.5L316.1 408.0L315.6 405.5L315.1 402.5L314.6 400.0L314.1 397.5L313.6 394.5L313.1 392.0L312.6 389.5L312.1 386.5L311.6 384.0L311.1 381.5L310.6 379.0L310.1 376.5L309.6 373.5L309.1 371.0L308.6 368.5L308.1 366.0L307.6 363.5L307.1 361.0L306.6 358.5L306.1 356.0L305.6 354.0L305.1 351.5L304.6 349.0L304.1 346.5L303.6 344.5L303.1 342.0L302.6 340.0L302.1 337.5L301.6 335.5L301.1 333.0L300.6 331.0L300.1 329.0L299.6 327.0L299.1 325.0L298.6 323.0L298.1 321.0L297.6 319.0L297.1 317.0L296.6 315.0L296.1 313.5L295.6 311.5L295.1 310.0L294.6 308.0L294.1 309.0L293.6 311.0L293.1 312.5L292.6 314.5L292.1 316.5L291.6 318.0L291.1 320.0L290.6 322.0L290.1 324.0L289.6 326.0L289.1 328.0L288.6 330.0L288.1 332.5L287.6 334.5L287.1 336.5L286.6 339.0L286.1 341.0L285.6 343.5L285.1 345.5L284.6 348.0L284.1 350.5L283.6 353.0L283.1 355.0L282.6 357.5L282.1 360.0L281.6 362.5L281.1 365.0L280.6 367.5L280.1 370.0L279.6 372.5L279.1 375.5L278.6 378.0L278.1 380.5L277.6 383.0L277.1 385.5L276.6 388.5L276.1 391.0L275.6 393.5L275.1 396.0L274.6 399.0L274.1 401.5L273.6 404.0L273.1 407.0L272.6 409.5L272.1 412.0L271.6 415.0L271.1 417.5L270.6 420.0L270.1 423.0L269.6 425.5L269.1 428.0L268.6 431.0L268.1 433.5L267.6 436.0L267.1 438.5L266.6 441.0L266.1 444.0L265.6 446.5L265.1 449.0L264.6 451.5L264.1 454.0L263.6 456.5L263.1 459.0L262.6 461.5L262.1 463.5L261.6 466.0L261.1 468.5L260.6 471.0L260.1 473.0L259.6 475.5L259.1 477.5L258.6 480.0L258.1 482.0L257.6 484.5L257.1 486.5L256.6 488.5L256.1 490.5L255.6 492.5L255.1 494.5L254.6 496.5L254.1 498.5L253.6 500.5L253.1 502.5L252.6 504.0L252.1 506.0L251.6 507.5L251.1 509.5L250.6 511.0L250.1 512.5L249.6 514.0L249.1 515.5L248.6 517.0L248.1 518.5L247.6 520.0L247.1 521.0L246.6 522.5L246.1 523.5L245.6 524.5L245.1 526.0L244.6 527.0L244.1 528.0L243.6 529.0L243.1 530.0L242.6 530.5L242.1 531.5L241.6 532.0L241.1 533.0L240.6 533.5L240.1 534.0L239.6 534.5L239.1 535.0L238.6 535.5L238.1 536.0L237.6 536.5L237.1 536.5L236.6 536.5L236.1 537.0L235.6 537.0L235.1 537.0L234.6 537.0L234.1 537.0L233.6 537.0L233.1 537.0L232.6 537.0L232.1 537.0L231.6 537.0L231.1 537.0L230.6 537.0L230.1 537.0L229.6 537.0L229.1 537.0L228.6 537.0L228.1 537.0L227.6 537.0L227.1 537.0L226.6 537.0L226.1 537.0L225.6 537.0L225.1 537.0L224.6 537.0L224.1 537.0L223.6 537.0L223.1 537.0L222.6 537.0L222.1 537.0L221.6 537.0L221.1 537.0L220.6 537.0L220.1 537.0L219.6 537.0L219.1 537.0L218.6 537.0L218.1 537.0L217.6 537.0L217.1 537.0L216.6 537.0L216.1 537.0L215.6 537.0L215.1 537.0L214.6 537.0L214.1 537.0L213.6 537.0L213.1 537.0L212.6 537.0L212.1 537.0L211.6 537.0L211.1 537.0L210.6 537.0L210.1 537.0L209.6 537.0L209.1 537.0L208.6 537.0L208.1 537.0L207.6 537.0L207.1 537.0L206.6 537.0L206.1 537.0L205.6 537.0L205.1 537.0L204.6 537.0L204.1 537.0L203.6 537.0L203.1 537.0L202.6 537.0L202.1 537.0L201.6 537.0L201.1 536.5L200.6 536.5L200.1 536.0L199.6 535.5L199.1 535.5L198.6 535.0L198.1 534.5L197.6 534.0L197.1 533.0L196.6 532.5L196.1 532.0L195.6 531.0L195.1 530.0L194.6 529.0L194.1 528.5L193.6 527.5L193.1 526.5L192.6 525.0L192.1 524.0L191.6 523.0L191.1 521.5L190.6 520.5L190.1 519.0L189.6 517.5L189.1 516.0L188.6 514.5L188.1 513.0L187.6 511.5L187.1 510.0L186.6 508.5L186.1 506.5L185.6 505.0L185.1 503.0L184.6 501.0L184.1 499.5L183.6 497.5L183.1 495.5L182.6 493.5L182.1 491.5L181.6 489.5L181.1 487.5L180.6 485.0L180.1 483.0L179.6 481.0L179.1 478.5L178.6 476.5L178.1 474.0L177.6 472.0L177.1 469.5L176.6 467.0L176.1 464.5L175.6 462.5L175.1 460.0L174.6 457.5L174.1 455.0L173.6 452.5L173.1 450.0L172.6 447.5L172.1 445.0L171.6 442.0L171.1 439.5L170.6 437.0L170.1 434.5L169.6 432.0L169.1 429.0L168.6 426.5L168.1 424.0L167.6 421.5L167.1 418.5L166.6 416.0L166.1 413.5L165.6 410.5L165.1 408.0L164.6 405.5L164.1 402.5L163.6 400.0L163.1 397.5L162.6 394.5L162.1 392.0L161.6 389.5L161.1 386.5L160.6 384.0L160.1 381.5L159.6 379.0L159.1 376.5L158.6 373.5L158.1 371.0L157.6 368.5L157.1 366.0L156.6 363.5L156.1 361.0L155.6 358.5L155.1 356.0L154.6 354.0L154.1 351.5L153.6 349.0L153.1 346.5L152.6 344.5L152.1 342.0L151.6 340.0L151.1 337.5L150.6 335.5L150.1 333.0L149.6 331.0L149.1 329.0L148.6 327.0L148.1 325.0L147.6 323.0L147.1 321.0L146.6 319.0L146.1 317.0L145.6 315.0L145.1 313.5L144.6 311.5L144.1 310.0L143.6 308.0L143.1 309.0L142.6 311.0L142.1 312.5L141.6 314.5L141.1 316.5L140.6 318.0L140.1 320.0L139.6 322.0L139.1 324.0L138.6 326.0L138.1 328.0L137.6 330.0L137.1 332.5L136.6 334.5L136.1 336.5L135.6 339.0L135.1 341.0L134.6 343.5L134.1 345.5L133.6 348.0L133.1 350.5L132.6 353.0L132.1 355.0L131.6 357.5L131.1 360.0L130.6 362.5L130.1 365.0L129.6 367.5L129.1 370.0L128.6 372.5L128.1 375.5L127.6 378.0L127.1 380.5L126.6 383.0L126.1 385.5L125.6 388.5L125.1 391.0L124.6 393.5L124.1 396.0L123.6 399.0L123.1 401.5L122.6 404.0L122.1 407.0L121.6 409.5L121.1 412.0L120.6 415.0L120.1 417.5L119.6 420.0L119.1 423.0L118.6 425.5L118.1 428.0L117.6 431.0L117.1 433.5L116.6 436.0L116.1 438.5L115.6 441.0L115.1 444.0L114.6 446.5L114.1 449.0L113.6 451.5L113.1 454.0L112.6 456.5L112.1 459.0L111.6 461.5L111.1 463.5L110.6 466.0L110.1 468.5L109.6 471.0L109.1 473.0L108.6 475.5L108.1 477.5L107.6 480.0L107.1 482.0L106.6 484.5L106.1 486.5L105.6 488.5L105.1 490.5L104.6 492.5L104.1 494.5L103.6 496.5L103.1 498.5L102.6 500.5L102.1 502.5L101.6 504.0L101.1 506.0L100.6 507.5L100.1 509.5L99.6 511.0L99.1 512.5L98.6 514.0L98.1 515.5L97.6 517.0L97.1 518.5L96.6 520.0L96.1 521.0L95.6 522.5L95.1 523.5L94.6 524.5L94.1 526.0L93.6 527.0L93.1 528.0L92.6 529.0L92.1 530.0L91.6 530.5L91.1 531.5L90.6 532.0L90.1 533.0L89.6 533.5L89.1 534.0L88.6 534.5L88.1 535.0L87.6 535.5L87.1 536.0L86.6 536.5L86.1 536.5L85.6 536.5L85.1 537.0L84.6 537.0L84.1 537.0L83.6 537.0L83.1 537.0L82.6 537.0L82.1 537.0L81.6 537.0L81.1 537.0L80.6 537.0L80.1 537.0L79.6 537.0L79.1 537.0L78.6 537.0L78.1 537.0L77.6 537.0L77.1 537.0L76.6 537.0L76.1 537.0L75.6 537.0L75.1 537.0L74.6 537.0L74.1 537.0L73.6 537.0L73.1 537.0L72.6 537.0L72.1 537.0L71.6 537.0L71.1 537.0L70.6 537.0L70.1 537.0L69.6 537.0L69.1 537.0L68.6 537.0L68.1 537.0L67.6 537.0L67.1 537.0L66.6 537.0L66.1 537.0L65.6 537.0L65.1 537.0L64.6 537.0L64.1 537.0L63.6 537.0L63.1 537.0L62.6 537.0L62.1 537.0L61.6 537.0L61.1 537.0L60.6 537.0L60.1 537.0L59.6 537.0L59.1 537.0L58.6 537.0L58.1 537.0L57.6 537.0L57.1 537.0L56.6 537.0L56.1 537.0L55.6 537.0L55.1 537.0L54.6 537.0L54.1 537.0L53.6 537.0L53.1 537.0L52.6 537.0L52.1 537.0L51.6 537.0L51.1 537.0L50.6 537.0L50.1 536.5L49.6 536.5L49.1 536.0L48.6 535.5L48.1 535.5L47.6 535.0L47.1 534.5L46.6 534.0L46.1 533.0L45.6 532.5L45.1 532.0L44.6 531.0L44.1 530.0L43.6 529.0L43.1 528.5L42.6 527.5L42.1 526.5L41.6 525.0L41.1 524.0L40.6 523.0L40.1 521.5L39.6 520.5L39.1 519.0L38.6 517.5L38.1 516.0L37.6 514.5L37.1 513.0L36.6 511.5L36.1 510.0L35.6 508.5L35.1 506.5L34.6 505.0L34.1 503.0L33.6 501.0L33.1 499.5L32.6 497.5L32.1 495.5L31.6 493.5L31.1 491.5L30.6 489.5Z" fill="#a0a0a0" shape-rendering="crispEdges"/><path d="M30.8 391.5L30.8 399.5L31.8 405.5L32.8 410.5L33.8 415.5L34.8 420.5L35.8 426.5L36.8 431.5L37.8 436.5L38.8 441.5L39.8 446.5L40.8 451.5L41.8 456.5L42.8 460.5L43.8 465.5L44.8 469.5L45.8 474.5L46.8 478.5L47.8 482.5L48.8 486.5L49.8 489.5L50.8 493.5L51.8 496.5L52.8 500.5L53.8 503.5L54.8 506.5L55.8 508.5L56.8 511.5L57.8 513.5L58.8 515.5L59.8 517.5L60.8 519.5L61.8 520.5L62.8 522.5L63.8 523.5L64.8 523.5L65.8 524.5L66.8 524.5L67.8 524.5L68.8 524.5L69.8 524.5L70.8 524.5L71.8 523.5L72.8 522.5L73.8 521.5L74.8 519.5L75.8 518.5L76.8 516.5L77.8 514.5L78.8 512.5L79.8 509.5L80.8 507.5L81.8 504.5L82.8 501.5L83.8 498.5L84.8 494.5L85.8 491.5L86.8 487.5L87.8 483.5L88.8 479.5L89.8 475.5L90.8 471.5L91.8 467.5L92.8 462.5L93.8 457.5L94.8 453.5L95.8 448.5L96.8 443.5L97.8 438.5L98.8 433.5L99.8 428.5L100.8 422.5L101.8 417.5L102.8 412.5L103.8 407.5L104.8 401.5L105.8 396.5L106.8 391.5L107.8 385.5L108.8 380.5L109.8 375.5L110.8 369.5L111.8 364.5L112.8 359.5L113.8 354.5L114.8 349.5L115.8 344.5L116.8 339.5L117.8 335.5L118.8 330.5L119.8 325.5L120.8 321.5L121.8 317.5L122.8 313.5L123.8 309.5L124.8 305.5L125.8 301.5L126.8 298.5L127.8 294.5L128.8 291.5L129.8 288.5L130.8 285.5L131.8 283.5L132.8 281.5L133.8 278.5L134.8 276.5L135.8 275.5L136.8 273.5L137.8 272.5L138.8 270.5L139.8 270.5L140.8 269.5L141.8 268.5L142.8 268.5L143.8 268.5L144.8 268.5L145.8 269.5L146.8 269.5L147.8 270.5L148.8 271.5L149.8 272.5L150.8 274.5L151.8 276.5L152.8 277.5L153.8 280.5L154.8 282.5L155.8 284.5L156.8 287.5L157.8 290.5L158.8 293.5L159.8 296.5L160.8 300.5L161.8 303.5L162.8 307.5L163.8 311.5L164.8 315.5L165.8 319.5L166.8 324.5L167.8 328.5L168.8 333.5L169.8 337.5L170.8 342.5L171.8 347.5L172.8 352.5L173.8 357.5L174.8 362.5L175.8 367.5L176.8 373.5L177.8 378.5L178.8 383.5L179.8 389.5L180.8 394.5L181.8 399.5L182.8 405.5L183.8 410.5L184.8 415.5L185.8 420.5L186.8 426.5L187.8 431.5L188.8 436.5L189.8 441.5L190.8 446.5L191.8 451.5L192.8 456.5L193.8 460.5L194.8 465.5L195.8 469.5L196.8 474.5L197.8 478.5L198.8 482.5L199.8 486.5L200.8 489.5L201.8 493.5L202.8 496.5L203.8 500.5L204.8 503.5L205.8 506.5L206.8 508.5L207.8 511.5L208.8 513.5L209.8 515.5L210.8 517.5L211.8 519.5L212.8 520.5L213.8 522.5L214.8 523.5L215.8 523.5L216.8 524.5L217.8 524.5L218.8 524.5L219.8 524.5L220.8 524.5L221.8 524.5L222.8 523.5L223.8 522.5L224.8 521.5L225.8 519.5L226.8 518.5L227.8 516.5L228.8 514.5L229.8 512.5L230.8 509.5L231.8 507.5L232.8 504.5L233.8 501.5L234.8 498.5L235.8 494.5L236.8 491.5L237.8 487.5L238.8 483.5L239.8 479.5L240.8 475.5L241.8 471.5L242.8 467.5L243.8 462.5L244.8 457.5L245.8 453.5L246.8 448.5L247.8 443.5L248.8 438.5L249.8 433.5L250.8 428.5L251.8 422.5L252.8 417.5L253.8 412.5L254.8 407.5L255.8 401.5L256.8 396.5L257.8 391.5L258.8 385.5L259.8 380.5L260.8 375.5L261.8 369.5L262.8 364.5L263.8 359.5L264.8 354.5L265.8 349.5L266.8 344.5L267.8 339.5L268.8 335.5L269.8 330.5L270.8 325.5L271.8 321.5L272.8 317.5L273.8 313.5L274.8 309.5L275.8 305.5L276.8 301.5L277.8 298.5L278.8 294.5L279.8 291.5L280.8 288.5L281.8 285.5L282.8 283.5L283.8 281.5L284.8 278.5L285.8 276.5L286.8 275.5L287.8 273.5L288.8 272.5L289.8 270.5L290.8 270.5L291.8 269.5L292.8 268.5L293.8 268.5L294.8 268.5L295.8 268.5L296.8 269.5L297.8 269.5L298.8 270.5L299.8 271.5L300.8 272.5L301.8 274.5L302.8 276.5L303.8 277.5L304.8 280.5L305.8 282.5L306.8 284.5L307.8 287.5L308.8 290.5L309.8 293.5L310.8 296.5L311.8 300.5L312.8 303.5L313.8 307.5L314.8 311.5L315.8 315.5L316.8 319.5L317.8 324.5L318.8 328.5L319.8 333.5L320.8 337.5L321.8 342.5L322.8 347.5L323.8 352.5L324.8 357.5L325.8 362.5L326.8 367.5L327.8 373.5L328.8 378.5L329.8 383.5L330.8 389.5L331.8 394.5L332.8 399.5L333.8 405.5L334.8 410.5L335.8 415.5L336.8 420.5L337.8 426.5L338.8 431.5L339.8 436.5L340.8 441.5L341.8 446.5L342.8 451.5L343.8 456.5L344.8 460.5L345.8 465.5L346.8 469.5L347.8 474.5L348.8 478.5L349.8 482.5L350.8 486.5L351.8 489.5L352.8 493.5L353.8 496.5L354.8 500.5L355.8 503.5L356.8 506.5L357.8 508.5L358.8 511.5L359.8 513.5L360.8 515.5L361.8 517.5L362.8 519.5L363.8 520.5L364.8 522.5L365.8 523.5L366.8 523.5L367.8 524.5L368.8 524.5L369.8 524.5L370.8 524.5L371.8 524.5L372.8 524.5L373.8 523.5L374.8 522.5L375.8 521.5L376.8 519.5L377.8 518.5L378.8 516.5L379.8 514.5L380.8 512.5L381.8 509.5L382.8 507.5L383.8 504.5L384.8 501.5L385.8 498.5L386.8 494.5L387.8 491.5L388.8 487.5L389.8 483.5L390.8 479.5L391.8 475.5L392.8 471.5L393.8 467.5L394.8 462.5L395.8 457.5L396.8 453.5L397.8 448.5L398.8 443.5L399.8 438.5L400.8 433.5L401.8 428.5L402.8 422.5L403.8 417.5L404.8 412.5L405.8 407.5L406.8 401.5L407.8 396.5L408.8 391.5L409.8 385.5L410.8 380.5L411.8 375.5L412.8 369.5L413.8 364.5L414.8 359.5L415.8 354.5L416.8 349.5L417.8 344.5L418.8 339.5L419.8 335.5L420.8 330.5L421.8 325.5L422.8 321.5L423.8 317.5L424.8 313.5L425.8 309.5L426.8 305.5L427.8 301.5L428.8 298.5L429.8 294.5L430.8 291.5L431.8 288.5L432.8 285.5L433.8 283.5L434.8 281.5L435.8 278.5L436.8 276.5L437.8 275.5L438.8 273.5L439.8 272.5L440.8 270.5L441.8 270.5L442.8 269.5L443.8 268.5L444.8 268.5L445.8 268.5L446.8 268.5L447.8 269.5L448.8 269.5L449.8 270.5L450.8 271.5L451.8 272.5L452.8 274.5L453.8 276.5L454.8 277.5L455.8 280.5L456.8 282.5L457.8 284.5L458.8 287.5L459.8 290.5L460.8 293.5L461.8 296.5L462.8 300.5L463.8 303.5L464.8 307.5L465.8 311.5L466.8 315.5L467.8 319.5L468.8 324.5L469.8 328.5L470.8 333.5L471.8 337.5L472.8 342.5L473.8 347.5L474.8 352.5L475.8 357.5L476.8 362.5L477.8 367.5L478.8 373.5L479.8 378.5L480.8 383.5L481.8 389.5L482.8 394.5L483.8 399.5L484.8 405.5L485.8 410.5L486.8 415.5L487.8 420.5L488.8 426.5L489.8 431.5L490.8 436.5L491.8 441.5L492.8 446.5L493.8 451.5L494.8 456.5L495.8 460.5L496.8 465.5L497.8 469.5L498.8 474.5L499.8 478.5L500.8 482.5L501.8 486.5L502.8 489.5L503.8 493.5L504.8 496.5L505.8 500.5L506.8 503.5L507.8 506.5L508.8 508.5L509.8 511.5L510.8 513.5L511.8 515.5L512.8 517.5L513.8 519.5L514.8 520.5L515.8 522.5L516.8 523.5L517.8 523.5L518.8 524.5L519.8 524.5L520.8 524.5L521.8 524.5L522.8 524.5L523.8 524.5L524.8 523.5L525.8 522.5L526.8 521.5L527.8 519.5L528.8 518.5L529.8 516.5L530.8 514.5L531.8 512.5L532.8 509.5L533.8 507.5L534.8 504.5L535.8 501.5L536.8 498.5L537.8 494.5L538.8 491.5L539.8 487.5L540.8 483.5L541.8 479.5L542.8 475.5L543.8 471.5L544.8 467.5L545.8 462.5L546.8 457.5L547.8 453.5L548.8 448.5L549.8 443.5L550.8 438.5L551.8 433.5L552.8 428.5L553.8 422.5L554.8 417.5L555.8 412.5L556.8 407.5L557.8 401.5L558.8 396.5L559.8 391.5L560.8 385.5L561.8 380.5L562.8 375.5L563.8 369.5L564.8 364.5L565.8 359.5L566.8 354.5L567.8 349.5L568.8 344.5L569.8 339.5L570.8 335.5L571.8 330.5L572.8 325.5L573.8 321.5L574.8 317.5L575.8 313.5L576.8 309.5L577.8 305.5L578.8 301.5L579.8 298.5L580.8 294.5L581.8 291.5L582.8 288.5L583.8 285.5L584.8 283.5L585.8 281.5L586.8 278.5L587.8 276.5L588.8 275.5L589.8 273.5L590.8 272.5L591.8 270.5L592.8 270.5L593.8 269.5L594.8 268.5L595.8 268.5L596.8 268.5L597.8 268.5L598.8 269.5L599.8 269.5L600.8 270.5L601.8 271.5L602.8 272.5L603.8 274.5L604.8 276.5L605.8 277.5L606.8 280.5L607.8 282.5L608.8 284.5L609.8 287.5L610.8 290.5L611.8 293.5L612.8 296.5L613.8 300.5L614.8 303.5L615.8 307.5L616.8 311.5L617.8 315.5L618.8 319.5L619.8 324.5L620.8 328.5L621.8 333.5L622.8 337.5L623.8 342.5L624.8 347.5L625.8 352.5L626.8 357.5L627.8 362.5L628.8 367.5L629.8 373.5L630.8 378.5L631.8 383.5L632.8 389.5L633.8 394.5L634.8 399.5L635.8 405.5L636.8 410.5L637.8 415.5L638.8 420.5L639.8 426.5L640.8 431.5L641.8 436.5L642.8 441.5L643.8 446.5L644.8 451.5L645.8 456.5L646.8 460.5L647.8 465.5L648.8 469.5L649.8 474.5L650.8 478.5L651.8 482.5L652.8 486.5L653.8 489.5L654.8 493.5L655.8 496.5L656.8 500.5L657.8 503.5L658.8 506.5L659.8 508.5L660.8 511.5L661.8 513.5L662.8 515.5L663.8 517.5L664.8 519.5L665.8 520.5L666.8 522.5L667.8 523.5L668.8 523.5L669.8 524.5L670.8 524.5L671.8 524.5L672.8 524.5L673.8 524.5L674.8 524.5L675.8 523.5L676.8 522.5L677.8 521.5L678.8 519.5L679.8 518.5L680.8 516.5L681.8 514.5L682.8 512.5L683.8 509.5L684.8 507.5L685.8 504.5L686.8 501.5L687.8 498.5L688.8 494.5L689.8 491.5L690.8 487.5L691.8 483.5L692.8 479.5L693.8 475.5L694.8 471.5L695.8 467.5L696.8 462.5L697.8 457.5L698.8 453.5L699.8 448.5L700.8 443.5L701.8 438.5L702.8 433.5L703.8 428.5L704.8 422.5L705.8 417.5L706.8 412.5L707.8 407.5L708.8 401.5L709.8 396.5L710.8 391.5L711.8 385.5L712.8 380.5L713.8 375.5L714.8 369.5L715.8 364.5L716.8 359.5L717.8 354.5L718.8 349.5L719.8 344.5L720.8 339.5L721.8 335.5L722.8 330.5L723.8 325.5L724.8 321.5L725.8 317.5L726.8 313.5L727.8 309.5L728.8 305.5L729.8 301.5L730.8 298.5L731.8 294.5L732.8 291.5L733.8 288.5L734.8 285.5L735.8 283.5L736.8 281.5L737.8 278.5L738.8 276.5L739.8 275.5L740.8 273.5L741.8 272.5L742.8 270.5L743.8 270.5L744.8 269.5L745.8 268.5L746.8 268.5L747.8 268.5L748.8 268.5L749.8 269.5L750.8 269.5L751.8 270.5L752.8 271.5L753.8 272.5L754.8 274.5L755.8 276.5L756.8 277.5L757.8 280.5L758.8 282.5L759.8 284.5L760.8 287.5L761.8 290.5L762.8 293.5L763.8 296.5L764.8 300.5L765.8 303.5L766.8 307.5L767.8 311.5L768.8 315.5L769.8 319.5L770.8 324.5L771.8 328.5L772.8 333.5L773.8 337.5L774.8 342.5L775.8 347.5L776.8 352.5L777.8 357.5L778.8 362.5L779.8 367.5L780.8 373.5L781.8 378.5L782.8 383.5L783.8 389.5L784.8 394.5" stroke="#e9e910" stroke-width="1.1" fill="none" shape-rendering="crispEdges"/><rect x="12" y="92" width="48" height="20.3" fill="#000"/><path d="M141.6 109.3H149.9V94.9H157.8V109.3" stroke="#7ddf7d" stroke-width="1.7" fill="none"/><path d="M141.6 109.8l1-1.6l1 1.6l1-1.6l1 1.6l1-1.6l1 1.6l1-1.6l1 1.6M150.2 94.6l1.1 1.8l1.1-1.8l1.1 1.8l1.1-1.8l1.1 1.8l1.1-1.8l1 1.8M158 109.8l1.1-2l1.1 2l1.1-2l1.1 2l1.1-2l1.1 2l1.1-2l1.1 2l1.1-2l1.1 2l1-2l1 2" stroke="#6fd86f" stroke-width=".9" fill="none"/><rect x="342" y="91.4" width="130" height="21.6" fill="#000"/><path d="M346.2 106.7L349.6 102.8L353.6 107.4L357.6 102.8L361.6 107.4L365.6 102.8L368.0 105.6" stroke="#c8c8c8" stroke-width="1" fill="none"/><path d="M368.0 105.6L369.6 107.4L373.6 102.8L377.6 107.4L381.6 102.8L385.6 107.4L389.6 102.8L393.6 107.4L397.6 102.8L401.6 107.4L405.6 102.8L409.6 107.4L413.6 102.8L417.6 107.4L421.6 102.8L425.6 107.4L429.6 102.8L433.6 107.4L437.6 102.8L441.6 107.4L445.2 103.3" stroke="#1c9a1c" stroke-width="1.1" fill="none"/><path d="M445.2 103.3L445.6 102.8L449.6 107.4L453.6 102.8L457.6 107.4L461.6 102.8L465.6 107.4L468.2 104.4" stroke="#c8c8c8" stroke-width="1" fill="none"/><path d="M347.3 98.4H345V110.8H347.3M467 98.4H469.3V110.8H467" stroke="#22b8c8" stroke-width="1.2" fill="none"/><path d="M405.3 93.8H409.9M407.6 93.8V98.6" stroke="#d87a20" stroke-width="1" fill="none"/><path d="M402.2 119.2Q402.2 118.2 403.2 118.2H412Q413 118.2 413 119.2V127.2L407.6 132.6L402.2 127.2Z" fill="#f28a18"/><path d="M404.6 120.9H410.6M407.6 120.9V127.3" stroke="#4a2a08" stroke-width="1.4" fill="none"/><rect x="706" y="92" width="97.2" height="21" fill="#000"/><rect x="724" y="96" width="26.6" height="15.2" fill="#f4f414"/><path d="M709.6 110H715.4V94.8H719.4" stroke="#f0e020" stroke-width="1.3" fill="none"/><path d="M711 104.4L715.2 100L719.2 104.4Z" fill="#f0e020"/><rect x="31" y="652.6" width="88" height="17" fill="#000"/><rect x="31.2" y="653.4" width="26.4" height="14.8" fill="#f4f414"/><path d="M59.4 662.6C60.4 657.8 62.6 657.8 63.8 661.2S66.8 665 68.2 660" stroke="#f0f0f0" stroke-width="1.1" fill="none"/><rect x="697" y="651.8" width="87.2" height="18" fill="#000"/><path d="M11 386H24L29.2 391.5L24 397H11Z" fill="#f2f200"/><path d="M804.4 391.4H792.4L787.4 397L792.4 402.6H804.4Z" fill="#f2f200"/><path d="M796 394H802.4M799.2 394V400.6" stroke="#2a2a00" stroke-width="1.3" fill="none"/></svg>
<div class="t" style="left:19.20px;top:96px;font-size:12.00px;color:#1fc81f;font-weight:normal;">Trig'D</div>
<div class="t" style="left:725.40px;top:98px;font-size:12.00px;color:#111;font-weight:normal;">CH1</div>
<div class="t" style="left:755.00px;top:98px;font-size:12.00px;color:#e6e63a;font-weight:normal;">-47.1mV</div>
<div class="t" style="left:34.20px;top:139px;font-size:13.40px;color:#20e020;font-weight:bold;">Pass: 124 wfs</div>
<div class="t" style="left:34.20px;top:164px;font-size:13.40px;color:#e01414;font-weight:bold;">Fail: 0 wfs</div>
<div class="t" style="left:34.20px;top:188px;font-size:13.40px;color:#20d8e8;font-weight:bold;">Total: 124 wfs</div>
<div class="t" style="left:32.60px;top:655px;font-size:12.00px;color:#111;font-weight:normal;">CH1</div>
<div class="t" style="left:74.20px;top:655px;font-size:12.00px;color:#e6e63a;font-weight:normal;">500mV</div>
<div class="t" style="left:699.60px;top:655px;font-size:12.00px;color:#e8902c;font-weight:normal;">Time: 500.0us</div>
<div class="t" style="left:15.20px;top:387px;font-size:10.00px;color:#222;font-weight:bold;">1</div>
<div class="a" style="left:807.2px;top:116.6px;width:186px;height:1px;background:#cfcfcf"></div>
<div class="a" style="left:807.2px;top:117.6px;width:186px;height:1px;background:#fcfcfc"></div>
<div class="a" style="left:806.9px;top:117.6px;width:1px;height:557.4px;background:#b4b4b4"></div>
<div class="a" style="left:808.2px;top:118.6px;width:1px;height:555px;background:#fbfbfb"></div>
<div class="a" style="left:980.6px;top:118.4px;width:12.6px;height:554.4px;background:linear-gradient(90deg,#e6e6e6,#f4f4f4 40%,#f6f6f6)"></div>
<div class="a" style="left:980.8px;top:136.4px;width:12.2px;height:379.6px;box-sizing:border-box;border:1px solid #9a9a9a;border-radius:2px;background:linear-gradient(90deg,#f6f6f6 0,#ececec 45%,#d6d6d6 55%,#cfcfcf 100%)"></div>
<svg class="a" style="left:980px;top:118px" width="14" height="220" viewBox="980 118 14 220"><path d="M984.6 129.4L987.3 125.6L990 129.4Z" fill="#404040"/><path d="M984 324H990.4M984 326.6H990.4M984 329.2H990.4" stroke="#707070" stroke-width="1"/><path d="M984 325H990.4M984 327.6H990.4M984 330.2H990.4" stroke="#fff" stroke-width=".7"/></svg>
<div class="t" style="left:857.60px;top:98px;font-size:12.00px;color:#111;font-weight:normal;">:</div>
<div class="a" style="left:863px;top:93.8px;width:20.6px;height:20.6px;border-radius:50%;background:#a2a2a2;border:1.1px solid #7d5e54;box-sizing:border-box"></div>
<div class="grp" style="top:130.2px;height:106.2px"></div>
<div class="glab" style="left:819.4px;top:125.2px;width:26.4px"></div>
<div class="grp" style="top:250.0px;height:144.4px"></div>
<div class="glab" style="left:819.4px;top:245.0px;width:26.4px"></div>
<div class="grp" style="top:407.9px;height:232.7px"></div>
<div class="glab" style="left:819.4px;top:402.9px;width:26.4px"></div>
<div class="t" style="left:830.10px;top:145px;font-size:11.50px;color:#111;font-weight:normal;">/</div>
<div class="combo" style="left:815.1px;top:161.2px;width:66.0px"></div>
<svg class="a" style="left:868.7px;top:169.2px" width="9" height="6" viewBox="0 0 9 6"><path d="M.6 .8H7.8L4.2 5Z" fill="#111"/></svg>
<div class="t" style="left:819.60px;top:167px;font-size:10.40px;color:#222;font-weight:normal;">500.0us</div>
<div class="combo dis" style="left:815.1px;top:208.3px;width:66.0px"></div>
<svg class="a" style="left:868.7px;top:216.3px" width="9" height="6" viewBox="0 0 9 6"><path d="M.6 .8H7.8L4.2 5Z" fill="#b4b4b4"/></svg>
<div class="t" style="left:819.60px;top:214px;font-size:10.40px;color:#b0b0b0;font-weight:normal;">Y - T</div>
<svg class="a" style="left:886.2px;top:151.1px" width="84" height="84" viewBox="-42 -42 84 84"><defs><linearGradient id="kr928" x1="0" y1="0" x2="1" y2="1"><stop offset="0" stop-color="#cfcfcf"/><stop offset=".5" stop-color="#ababab"/><stop offset="1" stop-color="#8a8a8a"/></linearGradient></defs><path d="M-26.16 26.16A37.0 37.0 0 1 1 26.16 26.16" fill="none" stroke="#1a1a1a" stroke-width="1"/><path d="M-24.25 24.25L-30.41 30.41" stroke="#111" stroke-width="1.1"/><path d="M24.25 24.25L30.41 30.41" stroke="#111" stroke-width="1.1"/><circle r="34.3" fill="url(#kr928)" stroke="#7c7c7c" stroke-width=".7"/><circle r="27.7" fill="#0202cc" stroke="#1c1c88" stroke-width="1.7"/><path d="M5.4 -23.0L1.6 -7.4" stroke="#eef0fa" stroke-width="1.8" stroke-linecap="butt"/></svg>
<svg class="a" style="left:887.2px;top:287.3px" width="84" height="84" viewBox="-42 -42 84 84"><defs><linearGradient id="kr929" x1="0" y1="0" x2="1" y2="1"><stop offset="0" stop-color="#cfcfcf"/><stop offset=".5" stop-color="#ababab"/><stop offset="1" stop-color="#8a8a8a"/></linearGradient></defs><path d="M-26.16 26.16A37.0 37.0 0 1 1 26.16 26.16" fill="none" stroke="#1a1a1a" stroke-width="1"/><path d="M-24.25 24.25L-30.41 30.41" stroke="#111" stroke-width="1.1"/><path d="M24.25 24.25L30.41 30.41" stroke="#111" stroke-width="1.1"/><circle r="34.3" fill="url(#kr929)" stroke="#7c7c7c" stroke-width=".7"/><circle r="27.1" fill="#fcfc08" stroke="#8f8f0c" stroke-width="1.7"/><path d="M-13.4 -17.6L-4.8 -6.2" stroke="#eeeea0" stroke-width="1.8" stroke-linecap="butt"/></svg>
<div class="combo" style="left:815.1px;top:266.2px;width:66.0px"></div>
<svg class="a" style="left:868.7px;top:274.2px" width="9" height="6" viewBox="0 0 9 6"><path d="M.6 .8H7.8L4.2 5Z" fill="#111"/></svg>
<div class="t" style="left:819.60px;top:272px;font-size:10.40px;color:#222;font-weight:normal;letter-spacing:-.55px;font-size:10.1px;">CH1</div>
<div class="a" style="left:886.4px;top:267.6px;width:12.4px;height:12.4px;box-sizing:border-box;border:1px solid #8e8f8f;background:linear-gradient(135deg,#dfe3e8,#fbfbfc);box-shadow:inset 0 0 0 1px #f4f4f4"></div>
<svg class="a" style="left:886px;top:267px" width="14" height="14" viewBox="0 0 14 14"><path d="M3.4 6.6L5.8 10.2L10.2 3" stroke="#31479c" stroke-width="1.8" fill="none"/></svg>
<div class="t" style="left:914.00px;top:270px;font-size:12.00px;color:#111;font-weight:normal;">/</div>
<div class="a" style="left:815.6px;top:293.2px;width:64.4px;height:19px;box-sizing:border-box;border:1px solid #dadada;background:#f4f4f4"></div>
<div class="t" style="left:819.60px;top:298px;font-size:10.40px;color:#222;font-weight:normal;">500mV</div>
<div class="a" style="left:864.4px;top:293.2px;width:15.4px;height:19px;box-sizing:border-box;border:1px solid #cdcdcd;background:linear-gradient(180deg,#f6f6f6,#e6e6e6)"></div>
<svg class="a" style="left:864px;top:293px" width="16" height="20" viewBox="0 0 16 20"><path d="M5.4 7.4L8.1 4.2L10.8 7.4Z" fill="#5c5cc0"/><path d="M5.4 11.8L8.1 15L10.8 11.8Z" fill="#7c7cd0"/><path d="M1.4 9.6H14.6" stroke="#cfcfcf" stroke-width=".8"/></svg>
<div class="combo" style="left:815.1px;top:319.4px;width:66.0px"></div>
<svg class="a" style="left:868.7px;top:327.4px" width="9" height="6" viewBox="0 0 9 6"><path d="M.6 .8H7.8L4.2 5Z" fill="#111"/></svg>
<div class="combo" style="left:815.1px;top:346.4px;width:66.0px"></div>
<svg class="a" style="left:868.7px;top:354.4px" width="9" height="6" viewBox="0 0 9 6"><path d="M.6 .8H7.8L4.2 5Z" fill="#111"/></svg>
<div class="t" style="left:819.60px;top:352px;font-size:10.40px;color:#222;font-weight:normal;">x1</div>
<div class="combo" style="left:900.1px;top:422.4px;width:65.9px"></div>
<svg class="a" style="left:953.6px;top:430.4px" width="9" height="6" viewBox="0 0 9 6"><path d="M.6 .8H7.8L4.2 5Z" fill="#111"/></svg>
<div class="combo" style="left:900.1px;top:451.6px;width:65.9px"></div>
<svg class="a" style="left:953.6px;top:459.6px" width="9" height="6" viewBox="0 0 9 6"><path d="M.6 .8H7.8L4.2 5Z" fill="#111"/></svg>
<div class="combo" style="left:900.1px;top:480.6px;width:65.9px"></div>
<svg class="a" style="left:953.6px;top:488.6px" width="9" height="6" viewBox="0 0 9 6"><path d="M.6 .8H7.8L4.2 5Z" fill="#111"/></svg>
<div class="t" style="left:904.60px;top:486px;font-size:10.40px;color:#222;font-weight:normal;letter-spacing:-.55px;font-size:10.1px;">CH1</div>
<div class="combo" style="left:900.1px;top:510.4px;width:65.9px"></div>
<svg class="a" style="left:953.6px;top:518.4px" width="9" height="6" viewBox="0 0 9 6"><path d="M.6 .8H7.8L4.2 5Z" fill="#111"/></svg>
<div class="t" style="left:904.60px;top:517px;font-size:8.60px;color:#222;font-weight:normal;">+</div>
<svg class="a" style="left:812px;top:671px" width="52" height="4" viewBox="812 671 52 4"><path d="M816 674.4l1.6-1.4M822.6 672.8v2.4M828 674h6.2M837.4 672.6v2.6M839.6 674l1.4 1M844.4 673.4h3M850.6 672.8l-1.2 2.4M853.6 673.2h2.6M858.4 672.6v2.6" stroke="#1a1a1a" stroke-width="1.2" fill="none"/></svg>
<svg class="ov" width="1000" height="701" viewBox="0 0 1000 701" font-family='"Liberation Sans", "Noto Sans CJK SC", sans-serif'>
<g font-size="12.2" fill="#101010">
<text x="36.70 48.90" y="43.34">文件</text>
<text x="87.10 99.30" y="43.34">视图</text>
<text x="139.70 151.90" y="43.34">设置</text>
<text x="190.70 202.90" y="43.34">显示</text>
<text x="244.00 256.20" y="43.34">光标</text>
<text x="296.70 308.90" y="43.34">测量</text>
<text x="353.00 365.20" y="43.34">获取</text>
<text x="405.70 417.90" y="43.34">辅助</text>
<text x="459.00 471.20" y="43.34">窗口</text>
<text x="515.70 527.90" y="43.34">帮助</text>
</g>
<text x="9.80 21.60 33.40" y="689.28" font-size="11.8" fill="#1a1a1a">已连接</text>
<text x="833.00 845.00" y="108.36" font-size="12" fill="#111">联机</text>
<g font-size="12.2" fill="#111">
<text x="820.60 832.80" y="133.34">水平</text>
<text x="820.60 832.80" y="253.74">垂直</text>
<text x="820.60 832.80" y="411.54">触发</text>
<text x="901.60" y="279.34">开</text>
<text x="917.20" y="279.34">关</text>
</g>
<text x="814.80" y="154.10" font-size="11.7" fill="#111">秒</text>
<text x="836.10" y="154.10" font-size="11.7" fill="#111">格</text>
<text x="814.90 826.70" y="200.18" font-size="11.8" fill="#111">格式</text>
<g font-size="11.7" fill="#222">
<text x="818.50 830.20" y="333.60">交流</text>
<text x="903.50 915.20" y="436.60">边沿</text>
<text x="903.50 915.20" y="465.80">自动</text>
</g>
<g font-size="11.6" fill="#111">
<text x="814.80 826.40 838.00 849.60" y="436.21">触发模式</text>
<text x="814.80 826.40 838.00 849.60" y="465.41">触发方式</text>
<text x="814.80 826.40 838.00 849.60" y="494.41">触发信源</text>
<text x="814.80 826.40 838.00 849.60" y="524.21">边沿类型</text>
</g>
</svg>
</body></html>
